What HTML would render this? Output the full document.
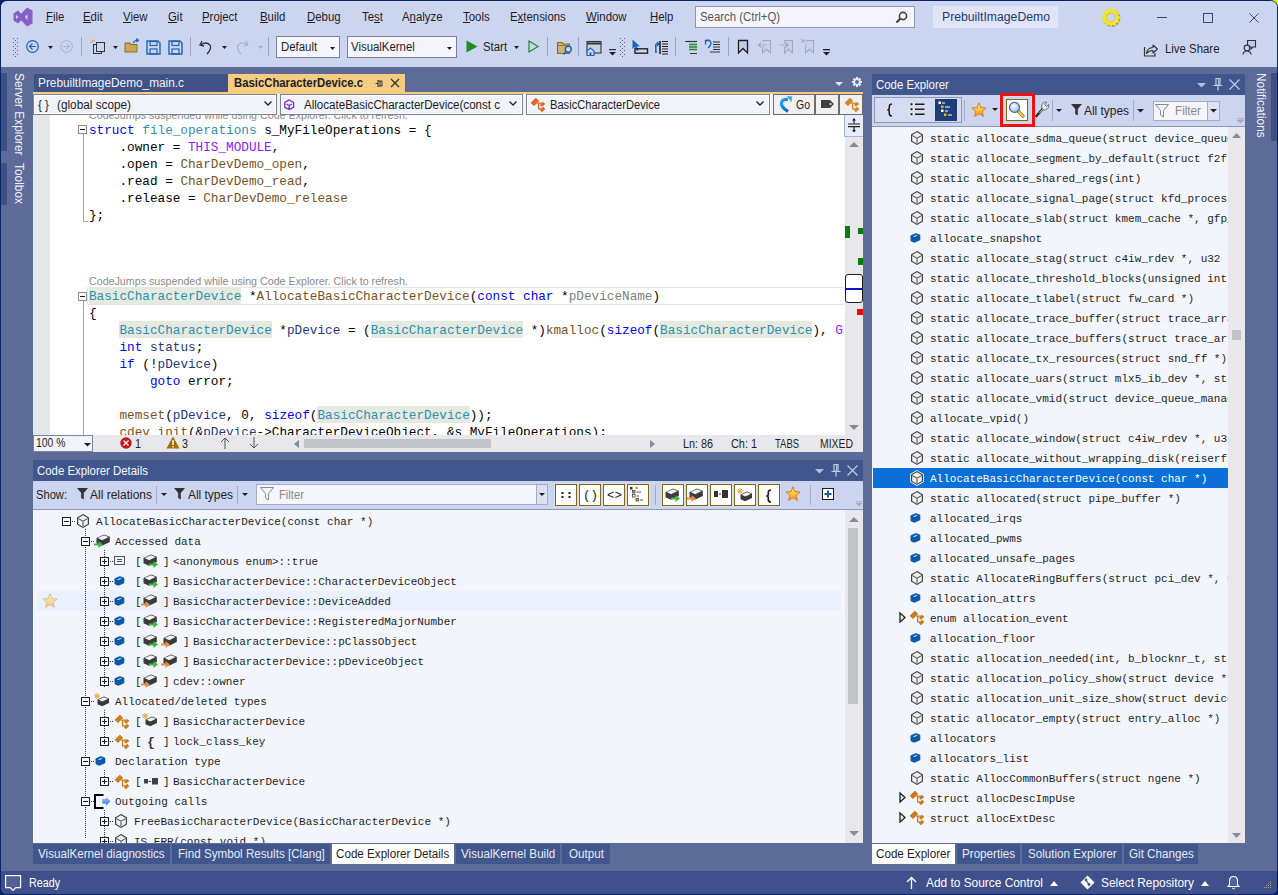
<!DOCTYPE html>
<html><head><meta charset="utf-8">
<style>
*{margin:0;padding:0;box-sizing:border-box}
html,body{width:1278px;height:895px;overflow:hidden;background:#0b2466}
body{font-family:"Liberation Sans",sans-serif;font-size:12px;color:#1e1e1e;position:relative}
.a{position:absolute}
.t{position:absolute;white-space:nowrap;line-height:1}
svg{overflow:visible}
</style></head><body>
<div class="a" style="left:1270px;top:0px;width:8px;height:8px;background:#d8f010;"></div>
<div class="a" style="left:0px;top:0px;width:1278px;height:895px;background:#0b2466;border-radius:0 8px 0 0;"></div>
<div class="a" style="left:1px;top:1px;width:1276px;height:893px;background:#5d6b99;border-radius:6px;overflow:hidden">
</div>
<div class="a" style="left:1px;top:1px;width:1276px;height:66px;background:#ccd5f0;border-radius:6px 6px 0 0;"></div>
<div class="a" style="left:1px;top:871px;width:1276px;height:23px;background:#40508d;border-radius:0 0 6px 6px;"></div>
<svg class="a" style="left:12px;top:6px;" width="22" height="22" viewBox="0 0 22 22"><path d="M6 4.5 L12.5 11 L6 17.5 L1.5 14.5 L1.5 7.5 Z M4 9 L4 13 L6.5 11 Z" fill="#865fc5" fill-rule="evenodd"/><path d="M15 1.5 L20.5 4.5 L20.5 17.5 L15 20.5 L8 13 L10.5 11 L8 9 Z M15.5 8 L12.8 11 L15.5 14 Z" fill="#865fc5" fill-rule="evenodd"/></svg>
<div class="t" style="left:46px;top:10.84px;font-size:12px;color:#1e1e1e;transform:scaleX(0.9500);transform-origin:0 0;">File</div>
<div class="a" style="left:46px;top:22px;width:7px;height:1px;background:#1e1e1e;"></div>
<div class="t" style="left:83px;top:10.84px;font-size:12px;color:#1e1e1e;transform:scaleX(0.9500);transform-origin:0 0;">Edit</div>
<div class="a" style="left:83px;top:22px;width:8px;height:1px;background:#1e1e1e;"></div>
<div class="t" style="left:123px;top:10.84px;font-size:12px;color:#1e1e1e;transform:scaleX(0.9500);transform-origin:0 0;">View</div>
<div class="a" style="left:123px;top:22px;width:8px;height:1px;background:#1e1e1e;"></div>
<div class="t" style="left:168px;top:10.84px;font-size:12px;color:#1e1e1e;transform:scaleX(0.9500);transform-origin:0 0;">Git</div>
<div class="a" style="left:168px;top:22px;width:9px;height:1px;background:#1e1e1e;"></div>
<div class="t" style="left:202px;top:10.84px;font-size:12px;color:#1e1e1e;transform:scaleX(0.9500);transform-origin:0 0;">Project</div>
<div class="a" style="left:202px;top:22px;width:8px;height:1px;background:#1e1e1e;"></div>
<div class="t" style="left:260px;top:10.84px;font-size:12px;color:#1e1e1e;transform:scaleX(0.9500);transform-origin:0 0;">Build</div>
<div class="a" style="left:260px;top:22px;width:8px;height:1px;background:#1e1e1e;"></div>
<div class="t" style="left:307px;top:10.84px;font-size:12px;color:#1e1e1e;transform:scaleX(0.9500);transform-origin:0 0;">Debug</div>
<div class="a" style="left:307px;top:22px;width:8px;height:1px;background:#1e1e1e;"></div>
<div class="t" style="left:362px;top:10.84px;font-size:12px;color:#1e1e1e;transform:scaleX(0.9500);transform-origin:0 0;">Test</div>
<div class="a" style="left:374px;top:22px;width:6px;height:1px;background:#1e1e1e;"></div>
<div class="t" style="left:402px;top:10.84px;font-size:12px;color:#1e1e1e;transform:scaleX(0.9500);transform-origin:0 0;">Analyze</div>
<div class="a" style="left:410px;top:22px;width:6px;height:1px;background:#1e1e1e;"></div>
<div class="t" style="left:463px;top:10.84px;font-size:12px;color:#1e1e1e;transform:scaleX(0.9500);transform-origin:0 0;">Tools</div>
<div class="a" style="left:463px;top:22px;width:7px;height:1px;background:#1e1e1e;"></div>
<div class="t" style="left:510px;top:10.84px;font-size:12px;color:#1e1e1e;transform:scaleX(0.9500);transform-origin:0 0;">Extensions</div>
<div class="a" style="left:518px;top:22px;width:6px;height:1px;background:#1e1e1e;"></div>
<div class="t" style="left:586px;top:10.84px;font-size:12px;color:#1e1e1e;transform:scaleX(0.9500);transform-origin:0 0;">Window</div>
<div class="a" style="left:586px;top:22px;width:11px;height:1px;background:#1e1e1e;"></div>
<div class="t" style="left:650px;top:10.84px;font-size:12px;color:#1e1e1e;transform:scaleX(0.9500);transform-origin:0 0;">Help</div>
<div class="a" style="left:650px;top:22px;width:8px;height:1px;background:#1e1e1e;"></div>
<div class="a" style="left:695px;top:6px;width:220px;height:22px;background:#f5f6fb;border:1px solid #8e95ae;"></div>
<div class="t" style="left:700px;top:10.84px;font-size:12px;color:#555;transform:scaleX(0.9500);transform-origin:0 0;">Search (Ctrl+Q)</div>
<svg class="a" style="left:895px;top:11px;" width="13" height="13" viewBox="0 0 13 13"><circle cx="8" cy="5" r="3.6" stroke="#444" stroke-width="1.6" fill="none"/><path d="M5.5 7.5 L1.5 11.5" stroke="#444" stroke-width="2.2"/></svg>
<div class="a" style="left:933px;top:6px;width:125px;height:22px;background:#dfe5f6;"></div>
<div class="t" style="left:942px;top:10.84px;font-size:12px;color:#1e3a78;transform:scaleX(1.0184);transform-origin:0 0;">PrebuiltImageDemo</div>
<svg class="a" style="left:1100px;top:8px;" width="22" height="20" viewBox="0 0 22 20"><g transform="translate(0.9,0.9)" opacity="0.45"><circle cx="10.9" cy="9.4" r="7" fill="none" stroke="#4a4a6a" stroke-width="3.2"/></g><rect x="9.7" y="0" width="2.4" height="2.6" fill="#f2e22a" transform="rotate(0 10.9 9.4)"/><rect x="9.7" y="0" width="2.4" height="2.6" fill="#f2e22a" transform="rotate(30 10.9 9.4)"/><rect x="9.7" y="0" width="2.4" height="2.6" fill="#f2e22a" transform="rotate(60 10.9 9.4)"/><rect x="9.7" y="0" width="2.4" height="2.6" fill="#f2e22a" transform="rotate(90 10.9 9.4)"/><rect x="9.7" y="0" width="2.4" height="2.6" fill="#f2e22a" transform="rotate(120 10.9 9.4)"/><rect x="9.7" y="0" width="2.4" height="2.6" fill="#f2e22a" transform="rotate(150 10.9 9.4)"/><rect x="9.7" y="0" width="2.4" height="2.6" fill="#f2e22a" transform="rotate(180 10.9 9.4)"/><rect x="9.7" y="0" width="2.4" height="2.6" fill="#f2e22a" transform="rotate(210 10.9 9.4)"/><rect x="9.7" y="0" width="2.4" height="2.6" fill="#f2e22a" transform="rotate(240 10.9 9.4)"/><rect x="9.7" y="0" width="2.4" height="2.6" fill="#f2e22a" transform="rotate(270 10.9 9.4)"/><rect x="9.7" y="0" width="2.4" height="2.6" fill="#f2e22a" transform="rotate(300 10.9 9.4)"/><rect x="9.7" y="0" width="2.4" height="2.6" fill="#f2e22a" transform="rotate(330 10.9 9.4)"/><circle cx="10.9" cy="9.4" r="6.1" fill="none" stroke="#f5e52a" stroke-width="3.6"/><circle cx="10.9" cy="9.4" r="4.4" fill="none" stroke="#b0a020" stroke-width="0.6" opacity="0.6"/></svg>
<div class="a" style="left:1157px;top:17px;width:10px;height:1px;background:#3c4670;"></div>
<div class="a" style="left:1203px;top:13px;width:10px;height:10px;border:1px solid #3c4670;"></div>
<svg class="a" style="left:1249px;top:13px;" width="10" height="10" viewBox="0 0 10 10"><path d="M0.5 0.5 L9.5 9.5 M9.5 0.5 L0.5 9.5" stroke="#3c4670" stroke-width="1"/></svg>
<svg class="a" style="left:13px;top:38px;" width="5" height="18" viewBox="0 0 5 18"><rect x="0" y="0" width="1" height="1" fill="#555d7a"/><rect x="2" y="2" width="1" height="1" fill="#555d7a"/><rect x="4" y="0" width="1" height="1" fill="#555d7a"/><rect x="0" y="4" width="1" height="1" fill="#555d7a"/><rect x="2" y="6" width="1" height="1" fill="#555d7a"/><rect x="4" y="4" width="1" height="1" fill="#555d7a"/><rect x="0" y="8" width="1" height="1" fill="#555d7a"/><rect x="2" y="10" width="1" height="1" fill="#555d7a"/><rect x="4" y="8" width="1" height="1" fill="#555d7a"/><rect x="0" y="12" width="1" height="1" fill="#555d7a"/><rect x="2" y="14" width="1" height="1" fill="#555d7a"/><rect x="4" y="12" width="1" height="1" fill="#555d7a"/><rect x="0" y="16" width="1" height="1" fill="#555d7a"/><rect x="2" y="18" width="1" height="1" fill="#555d7a"/><rect x="4" y="16" width="1" height="1" fill="#555d7a"/></svg>
<svg class="a" style="left:26px;top:40px;" width="13" height="13" viewBox="0 0 13 13"><circle cx="6.5" cy="6.5" r="5.8" stroke="#1e64b4" stroke-width="1.2" fill="#ccd5f0"/><path d="M10 6.5 H3.5 M6.5 3.5 L3.5 6.5 L6.5 9.5" stroke="#1e64b4" stroke-width="1.2" fill="none"/></svg>
<svg class="a" style="left:48px;top:46px;" width="5" height="3" viewBox="0 0 5 3"><path d="M0 0 L5 0 L2.5 3 Z" fill="#1e1e1e"/></svg>
<svg class="a" style="left:60px;top:40px;" width="13" height="13" viewBox="0 0 13 13"><circle cx="6.5" cy="6.5" r="5.8" stroke="#a8b0c8" stroke-width="1" fill="none"/><path d="M3 6.5 H9.5 M6.5 3.5 L9.5 6.5 L6.5 9.5" stroke="#a8b0c8" stroke-width="1" fill="none"/></svg>
<div class="a" style="left:81px;top:37px;width:1px;height:19px;background:#9aa3c4;"></div>
<svg class="a" style="left:90px;top:39px;" width="16" height="16" viewBox="0 0 16 16"><rect x="3.5" y="5.5" width="8" height="9" fill="none" stroke="#333"/><rect x="6.5" y="3.5" width="8" height="9" fill="#ccd5f0" stroke="#333"/><path d="M2 1 L3 3 M0 3 L2 3.5 M4.5 0.5 L4 2.5" stroke="#c8a040"/></svg>
<svg class="a" style="left:113px;top:46px;" width="5" height="3" viewBox="0 0 5 3"><path d="M0 0 L5 0 L2.5 3 Z" fill="#1e1e1e"/></svg>
<svg class="a" style="left:124px;top:38px;" width="17" height="16" viewBox="0 0 17 16"><path d="M1 5 H6 L7 6.5 H13 V14 H1 Z" fill="#c9a652" stroke="#8f6d1e"/><path d="M9 5 Q11 2 14 2 M12 0.5 L14.5 2 L12.5 4" stroke="#1e64b4" fill="none" stroke-width="1.2"/></svg>
<svg class="a" style="left:146px;top:40px;" width="15" height="15" viewBox="0 0 15 15"><path d="M1 1 H12 L14 3 V14 H1 Z" fill="none" stroke="#1e64b4" stroke-width="1.4"/><rect x="4" y="1.5" width="7" height="4" fill="none" stroke="#1e64b4" stroke-width="1.2"/><rect x="4" y="9" width="7" height="5" fill="none" stroke="#1e64b4" stroke-width="1.2"/></svg>
<svg class="a" style="left:168px;top:40px;" width="15" height="15" viewBox="0 0 15 15"><path d="M1 1 H12 L14 3 V14 H1 Z" fill="none" stroke="#1e64b4" stroke-width="1.4"/><rect x="4" y="1.5" width="7" height="4" fill="none" stroke="#1e64b4" stroke-width="1.2"/><rect x="4" y="9" width="7" height="5" fill="none" stroke="#1e64b4" stroke-width="1.2"/></svg>
<div class="a" style="left:190px;top:37px;width:1px;height:19px;background:#9aa3c4;"></div>
<svg class="a" style="left:199px;top:40px;" width="14" height="15" viewBox="0 0 14 15"><path d="M3 1 L1 5 L5 6 M1.5 5 Q7 1 11 5 Q13 9 8 14" stroke="#333" stroke-width="1.3" fill="none"/></svg>
<svg class="a" style="left:222px;top:46px;" width="5" height="3" viewBox="0 0 5 3"><path d="M0 0 L5 0 L2.5 3 Z" fill="#1e1e1e"/></svg>
<svg class="a" style="left:235px;top:40px;" width="14" height="15" viewBox="0 0 14 15"><path d="M11 1 L13 5 L9 6 M12.5 5 Q7 1 3 5 Q1 9 6 14" stroke="#a8b0c8" stroke-width="1.1" fill="none"/></svg>
<svg class="a" style="left:258px;top:46px;" width="5" height="3" viewBox="0 0 5 3"><path d="M0 0 L5 0 L2.5 3 Z" fill="#a8b0c8"/></svg>
<div class="a" style="left:268px;top:37px;width:1px;height:19px;background:#9aa3c4;"></div>
<div class="a" style="left:276px;top:36px;width:64px;height:22px;background:#f5f6fb;border:1px solid #7a8398;"></div>
<div class="t" style="left:281px;top:41.34px;font-size:12px;color:#1e1e1e;transform:scaleX(0.9500);transform-origin:0 0;">Default</div>
<svg class="a" style="left:330px;top:47px;" width="5" height="3" viewBox="0 0 5 3"><path d="M0 0 L5 0 L2.5 3 Z" fill="#1e1e1e"/></svg>
<div class="a" style="left:347px;top:36px;width:110px;height:22px;background:#f5f6fb;border:1px solid #7a8398;"></div>
<div class="t" style="left:351px;top:41.34px;font-size:12px;color:#1e1e1e;transform:scaleX(0.9500);transform-origin:0 0;">VisualKernel</div>
<svg class="a" style="left:447px;top:47px;" width="5" height="3" viewBox="0 0 5 3"><path d="M0 0 L5 0 L2.5 3 Z" fill="#1e1e1e"/></svg>
<svg class="a" style="left:466px;top:40px;" width="12" height="13" viewBox="0 0 12 13"><path d="M0.5 0.5 L11.5 6.5 L0.5 12.5 Z" fill="#1f8a2a"/></svg>
<div class="t" style="left:483px;top:41.34px;font-size:12px;color:#1e1e1e;transform:scaleX(0.9500);transform-origin:0 0;">Start</div>
<svg class="a" style="left:514px;top:46px;" width="5" height="3" viewBox="0 0 5 3"><path d="M0 0 L5 0 L2.5 3 Z" fill="#1e1e1e"/></svg>
<svg class="a" style="left:528px;top:40px;" width="11" height="13" viewBox="0 0 11 13"><path d="M1 1 L10 6.5 L1 12 Z" fill="none" stroke="#1f8a2a" stroke-width="1.2"/></svg>
<div class="a" style="left:547px;top:37px;width:1px;height:19px;background:#9aa3c4;"></div>
<svg class="a" style="left:556px;top:40px;" width="18" height="16" viewBox="0 0 18 16"><path d="M1.5 2.5 H6 L7.5 4 H13.5 V13.5 H1.5 Z" fill="#c8b27a" stroke="#8c6a1e" stroke-width="1.1"/><path d="M1.5 5.5 H13.5" stroke="#8c6a1e" stroke-width="0.8"/><circle cx="12.3" cy="9.2" r="3" fill="#ccd5f0" stroke="#1e64b4" stroke-width="1.4"/><path d="M10.2 11.5 L7.5 14.5" stroke="#1e64b4" stroke-width="1.6"/></svg>
<div class="a" style="left:578px;top:37px;width:1px;height:19px;background:#9aa3c4;"></div>
<svg class="a" style="left:586px;top:40px;" width="17" height="16" viewBox="0 0 17 16"><rect x="1" y="1.5" width="14" height="11.5" fill="#c8d0e6" stroke="#333" stroke-width="1.1"/><path d="M1 3.5 H15" stroke="#333" stroke-width="2"/><path d="M1 15.5 V11 L4.5 8 L8 11 V15.5 Z" fill="#ccd5f0" stroke="#1e64b4" stroke-width="1.2"/><rect x="3.5" y="12.5" width="2" height="3" fill="#1e64b4"/></svg>
<svg class="a" style="left:609px;top:49px;" width="7" height="7" viewBox="0 0 7 7"><rect x="0" y="0" width="7" height="1.2" fill="#333"/><path d="M0 3 L7 3 L3.5 6.5 Z" fill="#1e1e1e"/></svg>
<svg class="a" style="left:620px;top:38px;" width="5" height="18" viewBox="0 0 5 18"><rect x="0" y="0" width="1" height="1" fill="#555d7a"/><rect x="2" y="2" width="1" height="1" fill="#555d7a"/><rect x="4" y="0" width="1" height="1" fill="#555d7a"/><rect x="0" y="4" width="1" height="1" fill="#555d7a"/><rect x="2" y="6" width="1" height="1" fill="#555d7a"/><rect x="4" y="4" width="1" height="1" fill="#555d7a"/><rect x="0" y="8" width="1" height="1" fill="#555d7a"/><rect x="2" y="10" width="1" height="1" fill="#555d7a"/><rect x="4" y="8" width="1" height="1" fill="#555d7a"/><rect x="0" y="12" width="1" height="1" fill="#555d7a"/><rect x="2" y="14" width="1" height="1" fill="#555d7a"/><rect x="4" y="12" width="1" height="1" fill="#555d7a"/><rect x="0" y="16" width="1" height="1" fill="#555d7a"/><rect x="2" y="18" width="1" height="1" fill="#555d7a"/><rect x="4" y="16" width="1" height="1" fill="#555d7a"/></svg>
<svg class="a" style="left:632px;top:39px;" width="17" height="16" viewBox="0 0 17 16"><path d="M0.5 0.5 L0.5 10 L3 8 L5 12 L6.5 11.3 L4.6 7.4 L7.8 7.2 Z" fill="#1e64b4"/><rect x="3" y="9.8" width="12.5" height="4.4" fill="none" stroke="#222" stroke-width="1.4"/></svg>
<svg class="a" style="left:654px;top:40px;" width="15" height="15" viewBox="0 0 15 15"><path d="M1 12 H3 M1.8 4 V12" stroke="#1e64b4" stroke-width="1.5" fill="none"/><path d="M1.8 4 H4 M3 2 L5 4 L3 6" stroke="#1e64b4" fill="none" stroke-width="1.3"/><path d="M6 1 V14" stroke="#222" stroke-width="1.6"/><path d="M8 1.5 H14 M8 4 H14 M8 6.5 H14 M8 9 H14 M8 11.5 H14 M8 14 H14" stroke="#222" stroke-width="1.1"/></svg>
<div class="a" style="left:675px;top:37px;width:1px;height:19px;background:#9aa3c4;"></div>
<svg class="a" style="left:684px;top:40px;" width="15" height="15" viewBox="0 0 15 15"><path d="M1 1.5 H6 M6 13.5 H13" stroke="#333" stroke-width="1.2"/><path d="M5 4.5 H13 M5 7 H13 M5 9.5 H13" stroke="#1f8a2a" stroke-width="1.3"/><path d="M3 1.5 H13" stroke="#333" stroke-width="1.2"/></svg>
<svg class="a" style="left:704px;top:39px;" width="17" height="16" viewBox="0 0 17 16"><path d="M1.5 5.5 L1.5 1.5 L5.5 1.5" stroke="#1e64b4" stroke-width="1.3" fill="none"/><path d="M1.8 1.8 Q6 0 7 4 Q7 7 4 9" stroke="#1e64b4" stroke-width="1.3" fill="none"/><path d="M9 3 H16 M9 5.5 H16 M9 8 H16 M9 10.5 H16 M6 13 H16" stroke="#333" stroke-width="1.1"/></svg>
<div class="a" style="left:728px;top:37px;width:1px;height:19px;background:#9aa3c4;"></div>
<svg class="a" style="left:737px;top:39px;" width="12" height="16" viewBox="0 0 12 16"><path d="M1.5 1.5 H10.5 V14 L6 9.5 L1.5 14 Z" fill="#c3cbe6" stroke="#1e1e1e" stroke-width="1.3"/></svg>
<svg class="a" style="left:757px;top:39px;" width="15" height="16" viewBox="0 0 15 16"><path d="M6 3 V1.5 H13.5 V14 L9.5 10 L5.5 14 V8" fill="#c8d0ea" stroke="#a3a9bd" stroke-width="1.1"/><path d="M9 6 H1.5 M4 3.5 L1.5 6 L4 8.5" stroke="#a3a9bd" fill="none" stroke-width="1.1"/></svg>
<svg class="a" style="left:779px;top:39px;" width="15" height="16" viewBox="0 0 15 16"><path d="M5.5 4 V1.5 H13.5 V14 L9.5 10 L5.5 14 V8" fill="#c8d0ea" stroke="#a3a9bd" stroke-width="1.1"/><path d="M0.5 6 H9 M6.5 3.5 L9 6 L6.5 8.5" stroke="#a3a9bd" fill="none" stroke-width="1.1"/></svg>
<svg class="a" style="left:800px;top:38px;" width="15" height="17" viewBox="0 0 15 17"><path d="M5.5 2.5 H13.5 V15 L9.5 11 L5.5 15 V7" fill="#c8d0ea" stroke="#a3a9bd" stroke-width="1.1"/><path d="M1 1 L5 5 M5 1 L1 5" stroke="#a3a9bd" stroke-width="1"/></svg>
<svg class="a" style="left:823px;top:49px;" width="7" height="7" viewBox="0 0 7 7"><rect x="0" y="0" width="7" height="1.3" fill="#1e1e1e"/><path d="M0 3 L7 3 L3.5 6.5 Z" fill="#1e1e1e"/></svg>
<svg class="a" style="left:1143px;top:42px;" width="16" height="15" viewBox="0 0 16 15"><path d="M1.5 5 V14 H12 V11" stroke="#333" fill="none" stroke-width="1.2"/><path d="M3.5 11.5 Q4 6 10 5.5 V3 L14.5 7 L10 11 V8.5 Q6 8.5 3.5 11.5 Z" stroke="#333" fill="#ccd5f0" stroke-width="1.1" stroke-linejoin="round"/></svg>
<div class="t" style="left:1165px;top:42.84px;font-size:12px;color:#1e1e1e;transform:scaleX(0.9500);transform-origin:0 0;">Live Share</div>
<svg class="a" style="left:1242px;top:40px;" width="15" height="15" viewBox="0 0 15 15"><path d="M5.5 5 V0.5 H13.5 V7 H11 L9 9 V7 H8" fill="#c3cbe6" stroke="#333" stroke-width="1.1"/><circle cx="5" cy="8" r="2.8" fill="#ccd5f0" stroke="#333" stroke-width="1.2"/><path d="M0.8 14.5 Q1.5 11 5 11 Q8.5 11 9.2 14.5" stroke="#333" fill="#c3cbe6" stroke-width="1.2"/></svg>
<div class="a" style="left:1px;top:73px;width:6px;height:78px;background:#3e5083;"></div>
<div class="a" style="left:1px;top:163px;width:6px;height:42px;background:#3e5083;"></div>
<div class="t" style="left:12px;top:73px;font-size:12.5px;color:#f0f2fa;transform-origin:0 0;transform:translate(12.5px,0) rotate(90deg) scaleX(0.9500);line-height:1">Server Explorer</div>
<div class="t" style="left:12px;top:163px;font-size:12.5px;color:#f0f2fa;transform-origin:0 0;transform:translate(12.5px,0) rotate(90deg) scaleX(0.9500);line-height:1">Toolbox</div>
<div class="a" style="left:1271px;top:73px;width:6px;height:68px;background:#3e5083;"></div>
<div class="t" style="left:1254px;top:73px;font-size:12.5px;color:#f0f2fa;transform-origin:0 0;transform:translate(12.5px,0) rotate(90deg) scaleX(0.9500);line-height:1">Notifications</div>
<div class="a" style="left:34px;top:74px;width:194px;height:18px;background:#3f5186;"></div>
<div class="t" style="left:38px;top:76.84px;font-size:12px;color:#f0f2fa;transform:scaleX(0.9860);transform-origin:0 0;">PrebuiltImageDemo_main.c</div>
<div class="a" style="left:228px;top:74px;width:177px;height:18px;background:#f5cc84;"></div>
<div class="t" style="left:233.5px;top:76.84px;font-size:12px;color:#1e1e1e;font-weight:bold;transform:scaleX(0.9433);transform-origin:0 0;">BasicCharacterDevice.c</div>
<svg class="a" style="left:375px;top:79px;" width="9" height="9" viewBox="0 0 9 9"><path d="M0.5 4.5 H3 M3 1 V8 M3 2 H7 V7 H3 M5 2 V7" stroke="#333" fill="none"/></svg>
<svg class="a" style="left:390px;top:78px;" width="10" height="10" viewBox="0 0 10 10"><path d="M1 1 L9 9 M9 1 L1 9" stroke="#333" stroke-width="1.3"/></svg>
<svg class="a" style="left:835px;top:82px;" width="8" height="4" viewBox="0 0 8 4"><path d="M0 0 H8 L4 4 Z" fill="#e0e4f4"/></svg>
<svg class="a" style="left:852px;top:77px;" width="10" height="10" viewBox="0 0 10 10"><rect x="4" y="0" width="2" height="2.5" fill="#e6eaf6" transform="rotate(0 5 5)"/><rect x="4" y="0" width="2" height="2.5" fill="#e6eaf6" transform="rotate(45 5 5)"/><rect x="4" y="0" width="2" height="2.5" fill="#e6eaf6" transform="rotate(90 5 5)"/><rect x="4" y="0" width="2" height="2.5" fill="#e6eaf6" transform="rotate(135 5 5)"/><rect x="4" y="0" width="2" height="2.5" fill="#e6eaf6" transform="rotate(180 5 5)"/><rect x="4" y="0" width="2" height="2.5" fill="#e6eaf6" transform="rotate(225 5 5)"/><rect x="4" y="0" width="2" height="2.5" fill="#e6eaf6" transform="rotate(270 5 5)"/><rect x="4" y="0" width="2" height="2.5" fill="#e6eaf6" transform="rotate(315 5 5)"/><circle cx="5" cy="5" r="2.8" fill="none" stroke="#e6eaf6" stroke-width="1.8"/></svg>
<div class="a" style="left:33px;top:92px;width:830px;height:2px;background:#f5cc84;"></div>
<div class="a" style="left:33px;top:94px;width:830px;height:21px;background:#f3f3f7;"></div>
<div class="a" style="left:33px;top:94px;width:244px;height:21px;background:#f0f3fa;border:1px solid #7a8398;box-shadow:inset 0 0 0 1px #ffffff;"></div>
<div class="t" style="left:38px;top:98.84px;font-size:12px;color:#1e1e1e;transform:scaleX(0.9500);transform-origin:0 0;">{ }</div>
<div class="t" style="left:57px;top:98.84px;font-size:12px;color:#1e1e1e;transform:scaleX(0.9817);transform-origin:0 0;">(global scope)</div>
<svg class="a" style="left:264px;top:101px;" width="8" height="5" viewBox="0 0 8 5"><path d="M0.5 0.5 L4 4 L7.5 0.5" stroke="#1e1e1e" fill="none" stroke-width="1.3"/></svg>
<div class="a" style="left:280px;top:94px;width:243px;height:21px;background:#f0f3fa;border:1px solid #7a8398;box-shadow:inset 0 0 0 1px #ffffff;"></div>
<svg class="a" style="left:284px;top:99px;" width="11" height="12" viewBox="0 0 11 12"><path d="M5.2 1 L9.6 3.3 V8.3 L5.2 10.6 L0.8 8.3 V3.3 Z M2.5 5 L5.2 6.5 L7.9 5 M5.2 6.5 V10.6" stroke="#7b2fbe" fill="none" stroke-width="1.3"/></svg>
<div class="t" style="left:304px;top:98.84px;font-size:12px;color:#1e1e1e;transform:scaleX(0.9635);transform-origin:0 0;">AllocateBasicCharacterDevice(const c</div>
<svg class="a" style="left:509px;top:101px;" width="8" height="5" viewBox="0 0 8 5"><path d="M0.5 0.5 L4 4 L7.5 0.5" stroke="#1e1e1e" fill="none" stroke-width="1.3"/></svg>
<div class="a" style="left:526px;top:94px;width:244px;height:21px;background:#f0f3fa;border:1px solid #7a8398;box-shadow:inset 0 0 0 1px #ffffff;"></div>
<svg class="a" style="left:530px;top:97px;" width="16" height="16" viewBox="0 0 16 16"><g transform="scale(1.0)"><path d="M5.9 1.1 L8.8 3.9 L3.9 8.7 L1 5.8 Z M13.1 5.2 L14.9 7 L11.8 9.4 L10.3 7.7 Z M13.1 10.1 L14.9 12.1 L12 14.8 L10.2 13.2 Z" fill="#dc6a2a" stroke="#dc6a2a" stroke-width="0.7" stroke-linejoin="round"/><path d="M7 6.2 H12 M8.6 6.2 V11.8 H11.5" stroke="#dc6a2a" stroke-width="1.3" fill="none"/></g></svg>
<div class="t" style="left:550px;top:98.84px;font-size:12px;color:#1e1e1e;transform:scaleX(0.9266);transform-origin:0 0;">BasicCharacterDevice</div>
<svg class="a" style="left:756px;top:101px;" width="8" height="5" viewBox="0 0 8 5"><path d="M0.5 0.5 L4 4 L7.5 0.5" stroke="#1e1e1e" fill="none" stroke-width="1.3"/></svg>
<div class="a" style="left:773px;top:94px;width:42px;height:21px;background:#f0f0f0;border:1px solid #6d6d6d;"></div>
<div class="a" style="left:815px;top:94px;width:24px;height:21px;background:#f0f0f0;border:1px solid #6d6d6d;"></div>
<div class="a" style="left:839px;top:94px;width:24px;height:21px;background:#f0f0f0;border:1px solid #6d6d6d;"></div>
<svg class="a" style="left:779px;top:96px;" width="14" height="17" viewBox="0 0 14 17"><defs><linearGradient id="goG" x1="0" y1="0" x2="1" y2="1"><stop offset="0" stop-color="#2aa8f0"/><stop offset="1" stop-color="#0a64c0"/></linearGradient></defs><path d="M9 15.5 Q1.5 11 2.5 6.5 Q3.5 3 9 3.5" stroke="url(#goG)" stroke-width="3.2" fill="none"/><path d="M8 0 L13 0.5 L12.5 6.5 Z" fill="#2aa8f0"/></svg>
<div class="t" style="left:795.5px;top:98.84px;font-size:12px;color:#1e1e1e;transform:scaleX(0.8746);transform-origin:0 0;">Go</div>
<svg class="a" style="left:821px;top:100px;" width="13" height="8" viewBox="0 0 13 8"><path d="M0 0 H9 L13 4 L9 8 H0 Z" fill="#404040"/><circle cx="9.5" cy="4" r="1.1" fill="#f0f0f0"/></svg>
<svg class="a" style="left:844px;top:97px;" width="16" height="16" viewBox="0 0 16 16"><g transform="scale(1.0)"><path d="M5.9 1.1 L8.8 3.9 L3.9 8.7 L1 5.8 Z M13.1 5.2 L14.9 7 L11.8 9.4 L10.3 7.7 Z M13.1 10.1 L14.9 12.1 L12 14.8 L10.2 13.2 Z" fill="#d0862a" stroke="#d0862a" stroke-width="0.7" stroke-linejoin="round"/><path d="M7 6.2 H12 M8.6 6.2 V11.8 H11.5" stroke="#d0862a" stroke-width="1.3" fill="none"/></g></svg>
<div class="a" style="left:33px;top:115px;width:830px;height:320px;background:#ffffff;"></div>
<div class="a" style="left:33px;top:115px;width:17px;height:320px;background:#e6e7e8;"></div>
<div class="a" style="left:845px;top:115px;width:18px;height:320px;background:#e8e8ec;"></div>
<div class="a" style="left:844px;top:115px;width:19px;height:22px;background:#e6ecfa;border-left:1px solid #a4b4dc;border-bottom:1px solid #a4b4dc;"></div>
<svg class="a" style="left:848px;top:118px;" width="12" height="15" viewBox="0 0 12 15"><path d="M0 6 H12 M0 8.6 H12" stroke="#1e1e1e" stroke-width="1.1"/><path d="M6 2 V5.5 M6 9 V12.5" stroke="#1e1e1e" stroke-width="1.2"/><path d="M4 2.6 L6 0 L8 2.6 Z M4 11.9 L6 14.5 L8 11.9 Z" fill="#1e1e1e"/></svg>
<svg class="a" style="left:849px;top:142px;" width="10" height="5" viewBox="0 0 10 5"><path d="M0 5 L5 0 L10 5 Z" fill="#868999"/></svg>
<svg class="a" style="left:849px;top:425px;" width="10" height="5" viewBox="0 0 10 5"><path d="M0 0 L5 5 L10 0 Z" fill="#868999"/></svg>
<div class="a" style="left:845px;top:226px;width:5px;height:12px;background:#0f7a0f;"></div>
<div class="a" style="left:858px;top:228px;width:5px;height:6px;background:#0f7a0f;"></div>
<div class="a" style="left:858px;top:258px;width:5px;height:7px;background:#0f7a0f;"></div>
<div class="a" style="left:845px;top:274px;width:18px;height:29px;background:#fff;border:1px solid #1e1e1e;border-radius:3px;"></div>
<div class="a" style="left:846px;top:288px;width:16px;height:2px;background:#1010d0;"></div>
<div class="a" style="left:857px;top:309px;width:6px;height:6px;background:#ff0000;"></div>
<div class="a" style="left:50px;top:115px;width:794px;height:320px;overflow:hidden">
<div class="t" style="left:39px;top:-4.81px;font-size:11px;color:#8a8a8a;transform:scaleX(0.971);transform-origin:0 0">CodeJumps suspended while using Code Explorer. Click to refresh.</div>
<div class="t" style="left:39px;top:9.77px;font-size:12.69px;font-family:'Liberation Mono',monospace;white-space:pre"><span style="color:#0000ff">struct </span><span style="color:#2b91af">file_operations</span><span style="color:#000000"> s_MyFileOperations = {</span></div>
<div class="t" style="left:39px;top:26.77px;font-size:12.69px;font-family:'Liberation Mono',monospace;white-space:pre"><span style="color:#000000">    .owner = </span><span style="color:#8a1bff">THIS_MODULE</span><span style="color:#000000">,</span></div>
<div class="t" style="left:39px;top:43.77px;font-size:12.69px;font-family:'Liberation Mono',monospace;white-space:pre"><span style="color:#000000">    .open = </span><span style="color:#74531f">CharDevDemo_open</span><span style="color:#000000">,</span></div>
<div class="t" style="left:39px;top:60.77px;font-size:12.69px;font-family:'Liberation Mono',monospace;white-space:pre"><span style="color:#000000">    .read = </span><span style="color:#74531f">CharDevDemo_read</span><span style="color:#000000">,</span></div>
<div class="t" style="left:39px;top:77.77px;font-size:12.69px;font-family:'Liberation Mono',monospace;white-space:pre"><span style="color:#000000">    .release = </span><span style="color:#74531f">CharDevDemo_release</span></div>
<div class="t" style="left:39px;top:94.77px;font-size:12.69px;font-family:'Liberation Mono',monospace;white-space:pre"><span style="color:#000000">};</span></div>
<div class="t" style="left:39px;top:161.19px;font-size:11px;color:#8a8a8a;transform:scaleX(0.971);transform-origin:0 0">CodeJumps suspended while using Code Explorer. Click to refresh.</div>
<div class="a" style="left:37px;top:172px;width:800px;height:18px;border:1px solid #e4e4ec;border-right:none"></div>
<div class="a" style="left:39.00px;top:172px;width:152.28px;height:17px;background:#e5e9df"></div><div class="t" style="left:39px;top:175.77px;font-size:12.69px;font-family:'Liberation Mono',monospace;white-space:pre"><span style="color:#2b91af">BasicCharacterDevice</span><span style="color:#000000"> *</span><span style="color:#74531f">AllocateBasicCharacterDevice</span><span style="color:#000000">(</span><span style="color:#0000ff">const</span><span style="color:#000000"> </span><span style="color:#0000ff">char</span><span style="color:#000000"> *</span><span style="color:#808080">pDeviceName</span><span style="color:#000000">)</span></div>
<div class="t" style="left:39px;top:192.77px;font-size:12.69px;font-family:'Liberation Mono',monospace;white-space:pre"><span style="color:#000000">{</span></div>
<div class="a" style="left:69.46px;top:206px;width:152.28px;height:17px;background:#e5e9df"></div><div class="a" style="left:320.72px;top:206px;width:152.28px;height:17px;background:#e5e9df"></div><div class="a" style="left:610.05px;top:206px;width:152.28px;height:17px;background:#e5e9df"></div><div class="t" style="left:39px;top:209.77px;font-size:12.69px;font-family:'Liberation Mono',monospace;white-space:pre"><span style="color:#000000">    </span><span style="color:#2b91af">BasicCharacterDevice</span><span style="color:#000000"> *</span><span style="color:#1f377f">pDevice</span><span style="color:#000000"> = (</span><span style="color:#2b91af">BasicCharacterDevice</span><span style="color:#000000"> *)</span><span style="color:#74531f">kmalloc</span><span style="color:#000000">(</span><span style="color:#0000ff">sizeof</span><span style="color:#000000">(</span><span style="color:#2b91af">BasicCharacterDevice</span><span style="color:#000000">), </span><span style="color:#8a1bff">GFP_KERNEL);</span></div>
<div class="t" style="left:39px;top:226.77px;font-size:12.69px;font-family:'Liberation Mono',monospace;white-space:pre"><span style="color:#000000">    </span><span style="color:#0000ff">int</span><span style="color:#000000"> </span><span style="color:#1f377f">status</span><span style="color:#000000">;</span></div>
<div class="t" style="left:39px;top:243.77px;font-size:12.69px;font-family:'Liberation Mono',monospace;white-space:pre"><span style="color:#000000">    </span><span style="color:#0000ff">if</span><span style="color:#000000"> (!</span><span style="color:#1f377f">pDevice</span><span style="color:#000000">)</span></div>
<div class="t" style="left:39px;top:260.77px;font-size:12.69px;font-family:'Liberation Mono',monospace;white-space:pre"><span style="color:#000000">        </span><span style="color:#0000ff">goto</span><span style="color:#000000"> error;</span></div>
<div class="a" style="left:267.42px;top:291px;width:152.28px;height:17px;background:#e5e9df"></div><div class="t" style="left:39px;top:294.77px;font-size:12.69px;font-family:'Liberation Mono',monospace;white-space:pre"><span style="color:#000000">    </span><span style="color:#74531f">memset</span><span style="color:#000000">(</span><span style="color:#1f377f">pDevice</span><span style="color:#000000">, 0, </span><span style="color:#0000ff">sizeof</span><span style="color:#000000">(</span><span style="color:#2b91af">BasicCharacterDevice</span><span style="color:#000000">));</span></div>
<div class="t" style="left:39px;top:311.77px;font-size:12.69px;font-family:'Liberation Mono',monospace;white-space:pre"><span style="color:#000000">    </span><span style="color:#74531f">cdev_init</span><span style="color:#000000">(&amp;</span><span style="color:#1f377f">pDevice</span><span style="color:#000000">-&gt;</span><span style="color:#000000">CharacterDeviceObject</span><span style="color:#000000">, &amp;</span><span style="color:#000000">s_MyFileOperations</span><span style="color:#000000">);</span></div>
</div>
<div class="a" style="left:78px;top:125px;width:9px;height:9px;background:#fff;border:1px solid #8c8c8c;"></div>
<div class="a" style="left:80px;top:129px;width:5px;height:1px;background:#1e1e1e;"></div>
<div class="a" style="left:83px;top:134px;width:1px;height:88px;background:#a5a5a5;"></div>
<div class="a" style="left:83px;top:221px;width:5px;height:1px;background:#a5a5a5;"></div>
<div class="a" style="left:78px;top:292px;width:9px;height:9px;background:#fff;border:1px solid #8c8c8c;"></div>
<div class="a" style="left:80px;top:296px;width:5px;height:1px;background:#1e1e1e;"></div>
<div class="a" style="left:83px;top:301px;width:1px;height:134px;background:#a5a5a5;"></div>
<div class="a" style="left:33px;top:435px;width:830px;height:17px;background:#e8e8ec;"></div>
<div class="a" style="left:33px;top:435px;width:60px;height:17px;background:#f0f3fa;border:1px solid #7a8398;"></div>
<div class="t" style="left:35.5px;top:437.34px;font-size:12px;color:#1e1e1e;transform:scaleX(0.8670);transform-origin:0 0;">100 %</div>
<svg class="a" style="left:84px;top:443px;" width="7" height="4" viewBox="0 0 7 4"><path d="M0 0 H7 L3.5 3.5 Z" fill="#1e1e1e"/></svg>
<svg class="a" style="left:120px;top:437px;" width="12" height="12" viewBox="0 0 12 12"><circle cx="6" cy="6" r="5.7" fill="#c5161d"/><path d="M3.5 3.5 L8.5 8.5 M8.5 3.5 L3.5 8.5" stroke="#fff" stroke-width="1.3"/></svg>
<div class="t" style="left:135px;top:437.84px;font-size:12px;color:#1e1e1e;transform:scaleX(0.8990);transform-origin:0 0;">1</div>
<svg class="a" style="left:166px;top:436px;" width="14" height="13" viewBox="0 0 14 13"><path d="M7 0.5 L13.5 12.5 H0.5 Z" fill="#9c7000"/><rect x="6.3" y="4" width="1.4" height="5" fill="#fff"/><rect x="6.3" y="10" width="1.4" height="1.4" fill="#fff"/></svg>
<div class="t" style="left:182px;top:437.84px;font-size:12px;color:#1e1e1e;transform:scaleX(0.8990);transform-origin:0 0;">3</div>
<svg class="a" style="left:220px;top:437px;" width="10" height="12" viewBox="0 0 10 12"><path d="M5 12 V1 M1 5 L5 1 L9 5" stroke="#555" fill="none" stroke-width="1"/></svg>
<svg class="a" style="left:249px;top:437px;" width="10" height="12" viewBox="0 0 10 12"><path d="M5 0 V11 M1 7 L5 11 L9 7" stroke="#555" fill="none" stroke-width="1"/></svg>
<svg class="a" style="left:294px;top:440px;" width="5" height="8" viewBox="0 0 5 8"><path d="M5 0 V8 L0 4 Z" fill="#868999"/></svg>
<div class="a" style="left:304px;top:439px;width:187px;height:9px;background:#c2c3c9;"></div>
<svg class="a" style="left:650px;top:440px;" width="5" height="8" viewBox="0 0 5 8"><path d="M0 0 V8 L5 4 Z" fill="#868999"/></svg>
<div class="t" style="left:683px;top:437.84px;font-size:12px;color:#1e1e1e;transform:scaleX(0.8992);transform-origin:0 0;">Ln: 86</div>
<div class="t" style="left:731px;top:437.84px;font-size:12px;color:#1e1e1e;transform:scaleX(0.9065);transform-origin:0 0;">Ch: 1</div>
<div class="t" style="left:775px;top:437.84px;font-size:12px;color:#1e1e1e;transform:scaleX(0.7881);transform-origin:0 0;">TABS</div>
<div class="t" style="left:820px;top:437.84px;font-size:12px;color:#1e1e1e;transform:scaleX(0.8683);transform-origin:0 0;">MIXED</div>
<div class="a" style="left:33px;top:460px;width:830px;height:21px;background:#40568d;"></div>
<div class="t" style="left:37px;top:464.84px;font-size:12px;color:#f5f6fb;transform:scaleX(0.9500);transform-origin:0 0;">Code Explorer Details</div>
<svg class="a" style="left:815px;top:469px;" width="9" height="5" viewBox="0 0 9 5"><path d="M0 0 H9 L4.5 4.5 Z" fill="#b4bedd"/></svg>
<svg class="a" style="left:831px;top:464px;" width="10" height="13" viewBox="0 0 10 13"><path d="M3 0.5 H7 V7 H3 Z M0.5 7.5 H9.5 M5 7.5 V12.5" stroke="#c4cce6" fill="none" stroke-width="1.2"/><path d="M5.6 1 V6.5" stroke="#c4cce6" stroke-width="1"/></svg>
<svg class="a" style="left:847px;top:465px;" width="11" height="11" viewBox="0 0 11 11"><path d="M0.5 0.5 L10.5 10.5 M10.5 0.5 L0.5 10.5" stroke="#c4cce6" stroke-width="1.2"/></svg>
<div class="a" style="left:33px;top:481px;width:830px;height:29px;background:#ccd5f0;"></div>
<div class="a" style="left:33px;top:509px;width:830px;height:1px;background:#8e97b2;"></div>
<div class="t" style="left:36px;top:488.84px;font-size:12px;color:#1e1e1e;transform:scaleX(0.9295);transform-origin:0 0;">Show:</div>
<svg class="a" style="left:77px;top:488px;" width="11" height="12" viewBox="0 0 11 12"><path d="M0 0 H11 L6.8 5 V11.5 L4.2 10 V5 Z" fill="#333"/></svg>
<div class="t" style="left:90px;top:488.84px;font-size:12px;color:#1e1e1e;">All relations</div>
<div class="a" style="left:156px;top:486px;width:1px;height:18px;background:#a4abc3;"></div>
<svg class="a" style="left:161px;top:493px;" width="6" height="3" viewBox="0 0 6 3"><path d="M0 0 H6 L3 3 Z" fill="#1e1e1e"/></svg>
<svg class="a" style="left:174px;top:488px;" width="11" height="12" viewBox="0 0 11 12"><path d="M0 0 H11 L6.8 5 V11.5 L4.2 10 V5 Z" fill="#333"/></svg>
<div class="t" style="left:188px;top:488.84px;font-size:12px;color:#1e1e1e;transform:scaleX(0.9922);transform-origin:0 0;">All types</div>
<div class="a" style="left:237px;top:486px;width:1px;height:18px;background:#a4abc3;"></div>
<svg class="a" style="left:242px;top:493px;" width="6" height="3" viewBox="0 0 6 3"><path d="M0 0 H6 L3 3 Z" fill="#1e1e1e"/></svg>
<div class="a" style="left:256px;top:484px;width:292px;height:21px;background:#f5f6fb;border:1px solid #a4abc3;"></div>
<div class="a" style="left:536px;top:485px;width:11px;height:19px;background:#dde2f2;border-left:1px solid #a4abc3;"></div>
<svg class="a" style="left:539px;top:493px;" width="6" height="3" viewBox="0 0 6 3"><path d="M0 0 H6 L3 3 Z" fill="#1e1e1e"/></svg>
<svg class="a" style="left:260px;top:487px;" width="14" height="14" viewBox="0 0 14 14"><path d="M0.5 0.5 H13.5 L8.5 6.5 V13 L5.5 11 V6.5 Z" fill="none" stroke="#8a8a8a"/></svg>
<div class="t" style="left:279px;top:488.84px;font-size:12px;color:#8a8a8a;transform:scaleX(0.9375);transform-origin:0 0;">Filter</div>
<div class="a" style="left:555px;top:484px;width:22px;height:22px;background:#ffffff;border:1px solid #8b6508;box-shadow:0 0 0 1px #d6def6;"></div>
<div class="a" style="left:579px;top:484px;width:22px;height:22px;background:#ffffff;border:1px solid #8b6508;box-shadow:0 0 0 1px #d6def6;"></div>
<div class="a" style="left:603px;top:484px;width:22px;height:22px;background:#ffffff;border:1px solid #8b6508;box-shadow:0 0 0 1px #d6def6;"></div>
<div class="a" style="left:627px;top:484px;width:22px;height:22px;background:#ffffff;border:1px solid #8b6508;box-shadow:0 0 0 1px #d6def6;"></div>
<div class="a" style="left:662px;top:484px;width:22px;height:22px;background:#ffffff;border:1px solid #8b6508;box-shadow:0 0 0 1px #d6def6;"></div>
<div class="a" style="left:686px;top:484px;width:22px;height:22px;background:#ffffff;border:1px solid #8b6508;box-shadow:0 0 0 1px #d6def6;"></div>
<div class="a" style="left:710px;top:484px;width:22px;height:22px;background:#ffffff;border:1px solid #8b6508;box-shadow:0 0 0 1px #d6def6;"></div>
<div class="a" style="left:734px;top:484px;width:22px;height:22px;background:#ffffff;border:1px solid #8b6508;box-shadow:0 0 0 1px #d6def6;"></div>
<div class="a" style="left:758px;top:484px;width:22px;height:22px;background:#ffffff;border:1px solid #8b6508;box-shadow:0 0 0 1px #d6def6;"></div>
<div class="a" style="left:655px;top:485px;width:1px;height:20px;background:#a4abc3;"></div>
<div class="a" style="left:810px;top:485px;width:1px;height:20px;background:#a4abc3;"></div>
<svg class="a" style="left:561px;top:491px;" width="9" height="8" viewBox="0 0 9 8"><rect x="0.5" y="1" width="2" height="2" fill="#1e1e1e"/><rect x="0.5" y="5" width="2" height="2" fill="#1e1e1e"/><rect x="7.5" y="1" width="2" height="2" fill="#1e1e1e"/><rect x="7.5" y="5" width="2" height="2" fill="#1e1e1e"/></svg>
<div class="t" style="left:583px;top:490.42px;font-size:12.5px;color:#1e1e1e;font-family:'Liberation Mono',monospace;">()</div>
<div class="t" style="left:607px;top:490.42px;font-size:12.5px;color:#1e1e1e;font-family:'Liberation Mono',monospace;">&lt;&gt;</div>
<svg class="a" style="left:630px;top:487px;" width="16" height="16" viewBox="0 0 16 16"><rect x="0" y="0" width="2.5" height="2.5" fill="#333"/><path d="M5 1 H8" stroke="#555"/><rect x="2.5" y="3.5" width="2.5" height="2.5" fill="#e0b000" stroke="#333" stroke-width="0.7"/><path d="M6.5 5 H11" stroke="#555"/><rect x="2.5" y="7.5" width="2.5" height="2.5" fill="#fff" stroke="#333" stroke-width="0.7"/><path d="M6.5 9 H9" stroke="#555"/><rect x="6" y="11.5" width="2.5" height="2.5" fill="#e0b000" stroke="#333" stroke-width="0.7"/><path d="M10 13 H13" stroke="#555"/></svg>
<svg class="a" style="left:663px;top:487px;" width="18" height="16" viewBox="0 0 18 16"><g transform="translate(2,1)"><path d="M0.5 4 L8 0.5 L13.8 2.8 V8 L6 11.8 L0.5 9.3 Z" fill="#3a3a3a"/><path d="M1.6 4.1 L8 1.3 L12.6 3.1 L6.2 6.2 Z" fill="#f2f2f2"/></g><path d="M8 10.5 H12.5 V8 L17 11.5 L12.5 15 V12.5 H8 Z" fill="#3cb83c"/></svg>
<svg class="a" style="left:687px;top:487px;" width="18" height="16" viewBox="0 0 18 16"><g transform="translate(2,1)"><path d="M0.5 4 L8 0.5 L13.8 2.8 V8 L6 11.8 L0.5 9.3 Z" fill="#3a3a3a"/><path d="M1.6 4.1 L8 1.3 L12.6 3.1 L6.2 6.2 Z" fill="#f2f2f2"/></g><path d="M0 10.5 H4.5 V8 L9 11.5 L4.5 15 V12.5 H0 Z" fill="#f0883a"/></svg>
<svg class="a" style="left:714px;top:490px;" width="14" height="8" viewBox="0 0 14 8"><rect x="0" y="1" width="4" height="6" fill="#333"/><path d="M5 4 H7" stroke="#333"/><rect x="8" y="0" width="6" height="8" fill="#333"/></svg>
<svg class="a" style="left:737px;top:488px;" width="16" height="14" viewBox="0 0 16 14"><g transform="translate(3,3)"><path d="M0.5 3.6 L7 0.5 L12 2.5 V7 L5.2 10.3 L0.5 8.2 Z" fill="#3a3a3a"/><path d="M1.5 3.7 L7 1.2 L11 2.8 L5.4 5.5 Z" fill="#f2f2f2"/></g><g stroke="#e89a20" stroke-width="0.9"><path d="M3 0 V6 M0 3 H6 M0.9 0.9 L5.1 5.1 M5.1 0.9 L0.9 5.1"/></g><circle cx="3" cy="3" r="1.3" fill="#f5b030"/></svg>
<svg class="a" style="left:765px;top:489px;" width="8" height="14" viewBox="0 0 8 14"><path d="M6 1 Q3.3 1 3.3 3.5 V5.3 Q3.3 7 1.3 7 Q3.3 7 3.3 8.7 V10.5 Q3.3 13 6 13" stroke="#1e1e1e" stroke-width="1.7" fill="none"/></svg>
<svg class="a" style="left:785px;top:486px;" width="16" height="16" viewBox="0 0 16 16"><defs><linearGradient id="sg785486" x1="0" y1="0" x2="0" y2="1"><stop offset="0" stop-color="#fff3a0"/><stop offset="0.5" stop-color="#ffc83d"/><stop offset="1" stop-color="#f09020"/></linearGradient></defs><polygon points="8.00,0.80 9.94,5.63 15.13,5.98 11.14,9.32 12.41,14.37 8.00,11.60 3.59,14.37 4.86,9.32 0.87,5.98 6.06,5.63" fill="url(#sg785486)" stroke="#e07a1f" stroke-width="1" stroke-linejoin="round"/></svg>
<svg class="a" style="left:822px;top:488px;" width="12" height="12" viewBox="0 0 12 12"><rect x="0.5" y="0.5" width="11" height="11" fill="#fff" stroke="#1e1e1e"/><path d="M6 2.5 V9.5 M2.5 6 H9.5" stroke="#1e5aa8" stroke-width="2"/></svg>
<svg class="a" style="left:856px;top:501px;" width="6" height="5" viewBox="0 0 6 5"><path d="M0 0.5 H6 M0 2 H6 L3 5 Z" stroke="#aab" fill="#aab" stroke-width="0.8"/></svg>
<div class="a" style="left:33px;top:510px;width:812px;height:333px;background:#f2f5fc;"></div>
<div class="a" style="left:845px;top:510px;width:18px;height:333px;background:#e8e8ec;"></div>
<svg class="a" style="left:849px;top:517px;" width="10" height="5" viewBox="0 0 10 5"><path d="M0 5 L5 0 L10 5 Z" fill="#868999"/></svg>
<div class="a" style="left:848px;top:528px;width:10px;height:176px;background:#c2c3c9;"></div>
<svg class="a" style="left:849px;top:831px;" width="10" height="5" viewBox="0 0 10 5"><path d="M0 0 L5 5 L10 0 Z" fill="#868999"/></svg>
<div class="a" style="left:37px;top:591px;width:804px;height:20px;background:#eaf1fc;"></div>
<div class="a" style="left:0;top:0;opacity:0.45"><svg class="a" style="left:42px;top:593px;" width="16" height="16" viewBox="0 0 16 16"><defs><linearGradient id="sg42593" x1="0" y1="0" x2="0" y2="1"><stop offset="0" stop-color="#fff3a0"/><stop offset="0.5" stop-color="#ffc83d"/><stop offset="1" stop-color="#f09020"/></linearGradient></defs><polygon points="8.00,0.80 9.94,5.63 15.13,5.98 11.14,9.32 12.41,14.37 8.00,11.60 3.59,14.37 4.86,9.32 0.87,5.98 6.06,5.63" fill="url(#sg42593)" stroke="#e07a1f" stroke-width="1" stroke-linejoin="round"/></svg></div>
<div class="a" style="left:33px;top:510px;width:811px;height:333px;overflow:hidden">
<svg class="a" style="left:52px;top:19px;" width="1" height="310" viewBox="0 0 1 310"><rect x="0" y="0" width="1" height="1" fill="#333"/><rect x="0" y="2" width="1" height="1" fill="#333"/><rect x="0" y="4" width="1" height="1" fill="#333"/><rect x="0" y="6" width="1" height="1" fill="#333"/><rect x="0" y="8" width="1" height="1" fill="#333"/><rect x="0" y="10" width="1" height="1" fill="#333"/><rect x="0" y="12" width="1" height="1" fill="#333"/><rect x="0" y="14" width="1" height="1" fill="#333"/><rect x="0" y="16" width="1" height="1" fill="#333"/><rect x="0" y="18" width="1" height="1" fill="#333"/><rect x="0" y="20" width="1" height="1" fill="#333"/><rect x="0" y="22" width="1" height="1" fill="#333"/><rect x="0" y="24" width="1" height="1" fill="#333"/><rect x="0" y="26" width="1" height="1" fill="#333"/><rect x="0" y="28" width="1" height="1" fill="#333"/><rect x="0" y="30" width="1" height="1" fill="#333"/><rect x="0" y="32" width="1" height="1" fill="#333"/><rect x="0" y="34" width="1" height="1" fill="#333"/><rect x="0" y="36" width="1" height="1" fill="#333"/><rect x="0" y="38" width="1" height="1" fill="#333"/><rect x="0" y="40" width="1" height="1" fill="#333"/><rect x="0" y="42" width="1" height="1" fill="#333"/><rect x="0" y="44" width="1" height="1" fill="#333"/><rect x="0" y="46" width="1" height="1" fill="#333"/><rect x="0" y="48" width="1" height="1" fill="#333"/><rect x="0" y="50" width="1" height="1" fill="#333"/><rect x="0" y="52" width="1" height="1" fill="#333"/><rect x="0" y="54" width="1" height="1" fill="#333"/><rect x="0" y="56" width="1" height="1" fill="#333"/><rect x="0" y="58" width="1" height="1" fill="#333"/><rect x="0" y="60" width="1" height="1" fill="#333"/><rect x="0" y="62" width="1" height="1" fill="#333"/><rect x="0" y="64" width="1" height="1" fill="#333"/><rect x="0" y="66" width="1" height="1" fill="#333"/><rect x="0" y="68" width="1" height="1" fill="#333"/><rect x="0" y="70" width="1" height="1" fill="#333"/><rect x="0" y="72" width="1" height="1" fill="#333"/><rect x="0" y="74" width="1" height="1" fill="#333"/><rect x="0" y="76" width="1" height="1" fill="#333"/><rect x="0" y="78" width="1" height="1" fill="#333"/><rect x="0" y="80" width="1" height="1" fill="#333"/><rect x="0" y="82" width="1" height="1" fill="#333"/><rect x="0" y="84" width="1" height="1" fill="#333"/><rect x="0" y="86" width="1" height="1" fill="#333"/><rect x="0" y="88" width="1" height="1" fill="#333"/><rect x="0" y="90" width="1" height="1" fill="#333"/><rect x="0" y="92" width="1" height="1" fill="#333"/><rect x="0" y="94" width="1" height="1" fill="#333"/><rect x="0" y="96" width="1" height="1" fill="#333"/><rect x="0" y="98" width="1" height="1" fill="#333"/><rect x="0" y="100" width="1" height="1" fill="#333"/><rect x="0" y="102" width="1" height="1" fill="#333"/><rect x="0" y="104" width="1" height="1" fill="#333"/><rect x="0" y="106" width="1" height="1" fill="#333"/><rect x="0" y="108" width="1" height="1" fill="#333"/><rect x="0" y="110" width="1" height="1" fill="#333"/><rect x="0" y="112" width="1" height="1" fill="#333"/><rect x="0" y="114" width="1" height="1" fill="#333"/><rect x="0" y="116" width="1" height="1" fill="#333"/><rect x="0" y="118" width="1" height="1" fill="#333"/><rect x="0" y="120" width="1" height="1" fill="#333"/><rect x="0" y="122" width="1" height="1" fill="#333"/><rect x="0" y="124" width="1" height="1" fill="#333"/><rect x="0" y="126" width="1" height="1" fill="#333"/><rect x="0" y="128" width="1" height="1" fill="#333"/><rect x="0" y="130" width="1" height="1" fill="#333"/><rect x="0" y="132" width="1" height="1" fill="#333"/><rect x="0" y="134" width="1" height="1" fill="#333"/><rect x="0" y="136" width="1" height="1" fill="#333"/><rect x="0" y="138" width="1" height="1" fill="#333"/><rect x="0" y="140" width="1" height="1" fill="#333"/><rect x="0" y="142" width="1" height="1" fill="#333"/><rect x="0" y="144" width="1" height="1" fill="#333"/><rect x="0" y="146" width="1" height="1" fill="#333"/><rect x="0" y="148" width="1" height="1" fill="#333"/><rect x="0" y="150" width="1" height="1" fill="#333"/><rect x="0" y="152" width="1" height="1" fill="#333"/><rect x="0" y="154" width="1" height="1" fill="#333"/><rect x="0" y="156" width="1" height="1" fill="#333"/><rect x="0" y="158" width="1" height="1" fill="#333"/><rect x="0" y="160" width="1" height="1" fill="#333"/><rect x="0" y="162" width="1" height="1" fill="#333"/><rect x="0" y="164" width="1" height="1" fill="#333"/><rect x="0" y="166" width="1" height="1" fill="#333"/><rect x="0" y="168" width="1" height="1" fill="#333"/><rect x="0" y="170" width="1" height="1" fill="#333"/><rect x="0" y="172" width="1" height="1" fill="#333"/><rect x="0" y="174" width="1" height="1" fill="#333"/><rect x="0" y="176" width="1" height="1" fill="#333"/><rect x="0" y="178" width="1" height="1" fill="#333"/><rect x="0" y="180" width="1" height="1" fill="#333"/><rect x="0" y="182" width="1" height="1" fill="#333"/><rect x="0" y="184" width="1" height="1" fill="#333"/><rect x="0" y="186" width="1" height="1" fill="#333"/><rect x="0" y="188" width="1" height="1" fill="#333"/><rect x="0" y="190" width="1" height="1" fill="#333"/><rect x="0" y="192" width="1" height="1" fill="#333"/><rect x="0" y="194" width="1" height="1" fill="#333"/><rect x="0" y="196" width="1" height="1" fill="#333"/><rect x="0" y="198" width="1" height="1" fill="#333"/><rect x="0" y="200" width="1" height="1" fill="#333"/><rect x="0" y="202" width="1" height="1" fill="#333"/><rect x="0" y="204" width="1" height="1" fill="#333"/><rect x="0" y="206" width="1" height="1" fill="#333"/><rect x="0" y="208" width="1" height="1" fill="#333"/><rect x="0" y="210" width="1" height="1" fill="#333"/><rect x="0" y="212" width="1" height="1" fill="#333"/><rect x="0" y="214" width="1" height="1" fill="#333"/><rect x="0" y="216" width="1" height="1" fill="#333"/><rect x="0" y="218" width="1" height="1" fill="#333"/><rect x="0" y="220" width="1" height="1" fill="#333"/><rect x="0" y="222" width="1" height="1" fill="#333"/><rect x="0" y="224" width="1" height="1" fill="#333"/><rect x="0" y="226" width="1" height="1" fill="#333"/><rect x="0" y="228" width="1" height="1" fill="#333"/><rect x="0" y="230" width="1" height="1" fill="#333"/><rect x="0" y="232" width="1" height="1" fill="#333"/><rect x="0" y="234" width="1" height="1" fill="#333"/><rect x="0" y="236" width="1" height="1" fill="#333"/><rect x="0" y="238" width="1" height="1" fill="#333"/><rect x="0" y="240" width="1" height="1" fill="#333"/><rect x="0" y="242" width="1" height="1" fill="#333"/><rect x="0" y="244" width="1" height="1" fill="#333"/><rect x="0" y="246" width="1" height="1" fill="#333"/><rect x="0" y="248" width="1" height="1" fill="#333"/><rect x="0" y="250" width="1" height="1" fill="#333"/><rect x="0" y="252" width="1" height="1" fill="#333"/><rect x="0" y="254" width="1" height="1" fill="#333"/><rect x="0" y="256" width="1" height="1" fill="#333"/><rect x="0" y="258" width="1" height="1" fill="#333"/><rect x="0" y="260" width="1" height="1" fill="#333"/><rect x="0" y="262" width="1" height="1" fill="#333"/><rect x="0" y="264" width="1" height="1" fill="#333"/><rect x="0" y="266" width="1" height="1" fill="#333"/><rect x="0" y="268" width="1" height="1" fill="#333"/><rect x="0" y="270" width="1" height="1" fill="#333"/><rect x="0" y="272" width="1" height="1" fill="#333"/><rect x="0" y="274" width="1" height="1" fill="#333"/><rect x="0" y="276" width="1" height="1" fill="#333"/><rect x="0" y="278" width="1" height="1" fill="#333"/><rect x="0" y="280" width="1" height="1" fill="#333"/><rect x="0" y="282" width="1" height="1" fill="#333"/><rect x="0" y="284" width="1" height="1" fill="#333"/><rect x="0" y="286" width="1" height="1" fill="#333"/><rect x="0" y="288" width="1" height="1" fill="#333"/><rect x="0" y="290" width="1" height="1" fill="#333"/><rect x="0" y="292" width="1" height="1" fill="#333"/><rect x="0" y="294" width="1" height="1" fill="#333"/><rect x="0" y="296" width="1" height="1" fill="#333"/><rect x="0" y="298" width="1" height="1" fill="#333"/><rect x="0" y="300" width="1" height="1" fill="#333"/><rect x="0" y="302" width="1" height="1" fill="#333"/><rect x="0" y="304" width="1" height="1" fill="#333"/><rect x="0" y="306" width="1" height="1" fill="#333"/><rect x="0" y="308" width="1" height="1" fill="#333"/></svg>
<svg class="a" style="left:71px;top:40px;" width="1" height="137" viewBox="0 0 1 137"><rect x="0" y="0" width="1" height="1" fill="#333"/><rect x="0" y="2" width="1" height="1" fill="#333"/><rect x="0" y="4" width="1" height="1" fill="#333"/><rect x="0" y="6" width="1" height="1" fill="#333"/><rect x="0" y="8" width="1" height="1" fill="#333"/><rect x="0" y="10" width="1" height="1" fill="#333"/><rect x="0" y="12" width="1" height="1" fill="#333"/><rect x="0" y="14" width="1" height="1" fill="#333"/><rect x="0" y="16" width="1" height="1" fill="#333"/><rect x="0" y="18" width="1" height="1" fill="#333"/><rect x="0" y="20" width="1" height="1" fill="#333"/><rect x="0" y="22" width="1" height="1" fill="#333"/><rect x="0" y="24" width="1" height="1" fill="#333"/><rect x="0" y="26" width="1" height="1" fill="#333"/><rect x="0" y="28" width="1" height="1" fill="#333"/><rect x="0" y="30" width="1" height="1" fill="#333"/><rect x="0" y="32" width="1" height="1" fill="#333"/><rect x="0" y="34" width="1" height="1" fill="#333"/><rect x="0" y="36" width="1" height="1" fill="#333"/><rect x="0" y="38" width="1" height="1" fill="#333"/><rect x="0" y="40" width="1" height="1" fill="#333"/><rect x="0" y="42" width="1" height="1" fill="#333"/><rect x="0" y="44" width="1" height="1" fill="#333"/><rect x="0" y="46" width="1" height="1" fill="#333"/><rect x="0" y="48" width="1" height="1" fill="#333"/><rect x="0" y="50" width="1" height="1" fill="#333"/><rect x="0" y="52" width="1" height="1" fill="#333"/><rect x="0" y="54" width="1" height="1" fill="#333"/><rect x="0" y="56" width="1" height="1" fill="#333"/><rect x="0" y="58" width="1" height="1" fill="#333"/><rect x="0" y="60" width="1" height="1" fill="#333"/><rect x="0" y="62" width="1" height="1" fill="#333"/><rect x="0" y="64" width="1" height="1" fill="#333"/><rect x="0" y="66" width="1" height="1" fill="#333"/><rect x="0" y="68" width="1" height="1" fill="#333"/><rect x="0" y="70" width="1" height="1" fill="#333"/><rect x="0" y="72" width="1" height="1" fill="#333"/><rect x="0" y="74" width="1" height="1" fill="#333"/><rect x="0" y="76" width="1" height="1" fill="#333"/><rect x="0" y="78" width="1" height="1" fill="#333"/><rect x="0" y="80" width="1" height="1" fill="#333"/><rect x="0" y="82" width="1" height="1" fill="#333"/><rect x="0" y="84" width="1" height="1" fill="#333"/><rect x="0" y="86" width="1" height="1" fill="#333"/><rect x="0" y="88" width="1" height="1" fill="#333"/><rect x="0" y="90" width="1" height="1" fill="#333"/><rect x="0" y="92" width="1" height="1" fill="#333"/><rect x="0" y="94" width="1" height="1" fill="#333"/><rect x="0" y="96" width="1" height="1" fill="#333"/><rect x="0" y="98" width="1" height="1" fill="#333"/><rect x="0" y="100" width="1" height="1" fill="#333"/><rect x="0" y="102" width="1" height="1" fill="#333"/><rect x="0" y="104" width="1" height="1" fill="#333"/><rect x="0" y="106" width="1" height="1" fill="#333"/><rect x="0" y="108" width="1" height="1" fill="#333"/><rect x="0" y="110" width="1" height="1" fill="#333"/><rect x="0" y="112" width="1" height="1" fill="#333"/><rect x="0" y="114" width="1" height="1" fill="#333"/><rect x="0" y="116" width="1" height="1" fill="#333"/><rect x="0" y="118" width="1" height="1" fill="#333"/><rect x="0" y="120" width="1" height="1" fill="#333"/><rect x="0" y="122" width="1" height="1" fill="#333"/><rect x="0" y="124" width="1" height="1" fill="#333"/><rect x="0" y="126" width="1" height="1" fill="#333"/><rect x="0" y="128" width="1" height="1" fill="#333"/><rect x="0" y="130" width="1" height="1" fill="#333"/><rect x="0" y="132" width="1" height="1" fill="#333"/><rect x="0" y="134" width="1" height="1" fill="#333"/><rect x="0" y="136" width="1" height="1" fill="#333"/></svg>
<svg class="a" style="left:71px;top:200px;" width="1" height="30" viewBox="0 0 1 30"><rect x="0" y="0" width="1" height="1" fill="#333"/><rect x="0" y="2" width="1" height="1" fill="#333"/><rect x="0" y="4" width="1" height="1" fill="#333"/><rect x="0" y="6" width="1" height="1" fill="#333"/><rect x="0" y="8" width="1" height="1" fill="#333"/><rect x="0" y="10" width="1" height="1" fill="#333"/><rect x="0" y="12" width="1" height="1" fill="#333"/><rect x="0" y="14" width="1" height="1" fill="#333"/><rect x="0" y="16" width="1" height="1" fill="#333"/><rect x="0" y="18" width="1" height="1" fill="#333"/><rect x="0" y="20" width="1" height="1" fill="#333"/><rect x="0" y="22" width="1" height="1" fill="#333"/><rect x="0" y="24" width="1" height="1" fill="#333"/><rect x="0" y="26" width="1" height="1" fill="#333"/><rect x="0" y="28" width="1" height="1" fill="#333"/></svg>
<svg class="a" style="left:71px;top:260px;" width="1" height="10" viewBox="0 0 1 10"><rect x="0" y="0" width="1" height="1" fill="#333"/><rect x="0" y="2" width="1" height="1" fill="#333"/><rect x="0" y="4" width="1" height="1" fill="#333"/><rect x="0" y="6" width="1" height="1" fill="#333"/><rect x="0" y="8" width="1" height="1" fill="#333"/></svg>
<svg class="a" style="left:71px;top:300px;" width="1" height="33" viewBox="0 0 1 33"><rect x="0" y="0" width="1" height="1" fill="#333"/><rect x="0" y="2" width="1" height="1" fill="#333"/><rect x="0" y="4" width="1" height="1" fill="#333"/><rect x="0" y="6" width="1" height="1" fill="#333"/><rect x="0" y="8" width="1" height="1" fill="#333"/><rect x="0" y="10" width="1" height="1" fill="#333"/><rect x="0" y="12" width="1" height="1" fill="#333"/><rect x="0" y="14" width="1" height="1" fill="#333"/><rect x="0" y="16" width="1" height="1" fill="#333"/><rect x="0" y="18" width="1" height="1" fill="#333"/><rect x="0" y="20" width="1" height="1" fill="#333"/><rect x="0" y="22" width="1" height="1" fill="#333"/><rect x="0" y="24" width="1" height="1" fill="#333"/><rect x="0" y="26" width="1" height="1" fill="#333"/><rect x="0" y="28" width="1" height="1" fill="#333"/><rect x="0" y="30" width="1" height="1" fill="#333"/><rect x="0" y="32" width="1" height="1" fill="#333"/></svg>
<svg class="a" style="left:29px;top:7px;" width="9" height="9" viewBox="0 0 9 9"><rect x="0.5" y="0.5" width="8" height="8" fill="#f5f7fd" stroke="#1e1e1e"/><path d="M2 4.5 H7" stroke="#1e1e1e"/></svg><svg class="a" style="left:39px;top:11px;" width="4" height="1" viewBox="0 0 4 1"><rect x="0" y="0" width="1" height="1" fill="#333"/><rect x="2" y="0" width="1" height="1" fill="#333"/></svg><svg class="a" style="left:44px;top:4px;" width="12" height="14" viewBox="0 0 12 14"><path d="M6 0.6 L11.4 3.8 V10.2 L6 13.4 L0.6 10.2 V3.8 Z" fill="#f0f0f0" stroke="#404040" stroke-width="1.2"/><path d="M1.4 4.6 L6 7.2 L10.6 4.6" stroke="#404040" stroke-width="1" fill="none"/><path d="M6 7.2 V13" stroke="#888" stroke-width="1.6"/></svg><div class="t" style="left:63px;top:7.068499999999972px;font-size:11px;color:#1e1e1e;font-family:'Liberation Mono',monospace;white-space:pre;">AllocateBasicCharacterDevice(const char *)</div>
<svg class="a" style="left:48px;top:27px;" width="9" height="9" viewBox="0 0 9 9"><rect x="0.5" y="0.5" width="8" height="8" fill="#f5f7fd" stroke="#1e1e1e"/><path d="M2 4.5 H7" stroke="#1e1e1e"/></svg><svg class="a" style="left:58px;top:31px;" width="4" height="1" viewBox="0 0 4 1"><rect x="0" y="0" width="1" height="1" fill="#333"/><rect x="2" y="0" width="1" height="1" fill="#333"/></svg><svg class="a" style="left:61px;top:23px;" width="18" height="16" viewBox="0 0 18 16"><g transform="translate(2,1)"><path d="M0.5 4 L8 0.5 L13.8 2.8 V8 L6 11.8 L0.5 9.3 Z" fill="#3a3a3a"/><path d="M1.6 4.1 L8 1.3 L12.6 3.1 L6.2 6.2 Z" fill="#f2f2f2"/></g><path d="M0 10.5 H4.5 V8 L9 11.5 L4.5 15 V12.5 H0 Z" fill="#3cb83c"/></svg><div class="t" style="left:82px;top:27.068499999999972px;font-size:11px;color:#1e1e1e;font-family:'Liberation Mono',monospace;white-space:pre;">Accessed data</div>
<svg class="a" style="left:67px;top:47px;" width="9" height="9" viewBox="0 0 9 9"><rect x="0.5" y="0.5" width="8" height="8" fill="#f5f7fd" stroke="#1e1e1e"/><path d="M2 4.5 H7" stroke="#1e1e1e"/><path d="M4.5 2 V7" stroke="#1e1e1e"/></svg><svg class="a" style="left:77px;top:51px;" width="4" height="1" viewBox="0 0 4 1"><rect x="0" y="0" width="1" height="1" fill="#333"/><rect x="2" y="0" width="1" height="1" fill="#333"/></svg><svg class="a" style="left:81px;top:46px;" width="11" height="9" viewBox="0 0 11 9"><rect x="0.5" y="0.5" width="10" height="8" fill="#f5f5f5" stroke="#555"/><path d="M3 3.5 H8 M3 5.5 H8" stroke="#1b5fb0" stroke-width="1"/></svg><div class="t" style="left:102px;top:47.06849999999997px;font-size:11px;color:#1e1e1e;font-family:'Liberation Mono',monospace;">[</div><svg class="a" style="left:108px;top:43px;" width="18" height="16" viewBox="0 0 18 16"><g transform="translate(2,1)"><path d="M0.5 4 L8 0.5 L13.8 2.8 V8 L6 11.8 L0.5 9.3 Z" fill="#3a3a3a"/><path d="M1.6 4.1 L8 1.3 L12.6 3.1 L6.2 6.2 Z" fill="#f2f2f2"/></g><path d="M8 10.5 H12.5 V8 L17 11.5 L12.5 15 V12.5 H8 Z" fill="#3cb83c"/></svg><div class="t" style="left:130px;top:47.06849999999997px;font-size:11px;color:#1e1e1e;font-family:'Liberation Mono',monospace;">]</div><div class="t" style="left:140px;top:47.06849999999997px;font-size:11px;color:#1e1e1e;font-family:'Liberation Mono',monospace;white-space:pre;">&lt;anonymous enum&gt;::true</div>
<svg class="a" style="left:67px;top:67px;" width="9" height="9" viewBox="0 0 9 9"><rect x="0.5" y="0.5" width="8" height="8" fill="#f5f7fd" stroke="#1e1e1e"/><path d="M2 4.5 H7" stroke="#1e1e1e"/><path d="M4.5 2 V7" stroke="#1e1e1e"/></svg><svg class="a" style="left:77px;top:71px;" width="4" height="1" viewBox="0 0 4 1"><rect x="0" y="0" width="1" height="1" fill="#333"/><rect x="2" y="0" width="1" height="1" fill="#333"/></svg><svg class="a" style="left:81px;top:66px;" width="11" height="10" viewBox="0 0 11 10"><path d="M0.5 3.2 Q0.5 2.5 1.5 2 L5.5 0.3 Q6 0.1 6.8 0.4 L9.6 1.6 Q10.3 2 10.3 2.8 V6.4 Q10.3 7 9.5 7.4 L5 9.4 Q4.3 9.7 3.6 9.4 L1.2 8.2 Q0.5 7.8 0.5 7 Z" fill="#0b5aaa"/><path d="M3 3.6 L6.4 2.1 L7.6 2.6 L4.2 4.1 Z" fill="#ffffff" opacity="0.9"/></svg><div class="t" style="left:102px;top:67.06849999999997px;font-size:11px;color:#1e1e1e;font-family:'Liberation Mono',monospace;">[</div><svg class="a" style="left:108px;top:63px;" width="18" height="16" viewBox="0 0 18 16"><g transform="translate(2,1)"><path d="M0.5 4 L8 0.5 L13.8 2.8 V8 L6 11.8 L0.5 9.3 Z" fill="#3a3a3a"/><path d="M1.6 4.1 L8 1.3 L12.6 3.1 L6.2 6.2 Z" fill="#f2f2f2"/></g><path d="M8 10.5 H12.5 V8 L17 11.5 L12.5 15 V12.5 H8 Z" fill="#3cb83c"/></svg><div class="t" style="left:130px;top:67.06849999999997px;font-size:11px;color:#1e1e1e;font-family:'Liberation Mono',monospace;">]</div><div class="t" style="left:140px;top:67.06849999999997px;font-size:11px;color:#1e1e1e;font-family:'Liberation Mono',monospace;white-space:pre;">BasicCharacterDevice::CharacterDeviceObject</div>
<svg class="a" style="left:67px;top:87px;" width="9" height="9" viewBox="0 0 9 9"><rect x="0.5" y="0.5" width="8" height="8" fill="#f5f7fd" stroke="#1e1e1e"/><path d="M2 4.5 H7" stroke="#1e1e1e"/><path d="M4.5 2 V7" stroke="#1e1e1e"/></svg><svg class="a" style="left:77px;top:91px;" width="4" height="1" viewBox="0 0 4 1"><rect x="0" y="0" width="1" height="1" fill="#333"/><rect x="2" y="0" width="1" height="1" fill="#333"/></svg><svg class="a" style="left:81px;top:86px;" width="11" height="10" viewBox="0 0 11 10"><path d="M0.5 3.2 Q0.5 2.5 1.5 2 L5.5 0.3 Q6 0.1 6.8 0.4 L9.6 1.6 Q10.3 2 10.3 2.8 V6.4 Q10.3 7 9.5 7.4 L5 9.4 Q4.3 9.7 3.6 9.4 L1.2 8.2 Q0.5 7.8 0.5 7 Z" fill="#0b5aaa"/><path d="M3 3.6 L6.4 2.1 L7.6 2.6 L4.2 4.1 Z" fill="#ffffff" opacity="0.9"/></svg><div class="t" style="left:102px;top:87.06849999999997px;font-size:11px;color:#1e1e1e;font-family:'Liberation Mono',monospace;">[</div><svg class="a" style="left:108px;top:83px;" width="18" height="16" viewBox="0 0 18 16"><g transform="translate(2,1)"><path d="M0.5 4 L8 0.5 L13.8 2.8 V8 L6 11.8 L0.5 9.3 Z" fill="#3a3a3a"/><path d="M1.6 4.1 L8 1.3 L12.6 3.1 L6.2 6.2 Z" fill="#f2f2f2"/></g><path d="M0 10.5 H4.5 V8 L9 11.5 L4.5 15 V12.5 H0 Z" fill="#f0883a"/></svg><div class="t" style="left:130px;top:87.06849999999997px;font-size:11px;color:#1e1e1e;font-family:'Liberation Mono',monospace;">]</div><div class="t" style="left:140px;top:87.06849999999997px;font-size:11px;color:#1e1e1e;font-family:'Liberation Mono',monospace;white-space:pre;">BasicCharacterDevice::DeviceAdded</div>
<svg class="a" style="left:67px;top:107px;" width="9" height="9" viewBox="0 0 9 9"><rect x="0.5" y="0.5" width="8" height="8" fill="#f5f7fd" stroke="#1e1e1e"/><path d="M2 4.5 H7" stroke="#1e1e1e"/><path d="M4.5 2 V7" stroke="#1e1e1e"/></svg><svg class="a" style="left:77px;top:111px;" width="4" height="1" viewBox="0 0 4 1"><rect x="0" y="0" width="1" height="1" fill="#333"/><rect x="2" y="0" width="1" height="1" fill="#333"/></svg><svg class="a" style="left:81px;top:106px;" width="11" height="10" viewBox="0 0 11 10"><path d="M0.5 3.2 Q0.5 2.5 1.5 2 L5.5 0.3 Q6 0.1 6.8 0.4 L9.6 1.6 Q10.3 2 10.3 2.8 V6.4 Q10.3 7 9.5 7.4 L5 9.4 Q4.3 9.7 3.6 9.4 L1.2 8.2 Q0.5 7.8 0.5 7 Z" fill="#0b5aaa"/><path d="M3 3.6 L6.4 2.1 L7.6 2.6 L4.2 4.1 Z" fill="#ffffff" opacity="0.9"/></svg><div class="t" style="left:102px;top:107.06849999999997px;font-size:11px;color:#1e1e1e;font-family:'Liberation Mono',monospace;">[</div><svg class="a" style="left:108px;top:103px;" width="18" height="16" viewBox="0 0 18 16"><g transform="translate(2,1)"><path d="M0.5 4 L8 0.5 L13.8 2.8 V8 L6 11.8 L0.5 9.3 Z" fill="#3a3a3a"/><path d="M1.6 4.1 L8 1.3 L12.6 3.1 L6.2 6.2 Z" fill="#f2f2f2"/></g><path d="M8 10.5 H12.5 V8 L17 11.5 L12.5 15 V12.5 H8 Z" fill="#3cb83c"/></svg><div class="t" style="left:130px;top:107.06849999999997px;font-size:11px;color:#1e1e1e;font-family:'Liberation Mono',monospace;">]</div><div class="t" style="left:140px;top:107.06849999999997px;font-size:11px;color:#1e1e1e;font-family:'Liberation Mono',monospace;white-space:pre;">BasicCharacterDevice::RegisteredMajorNumber</div>
<svg class="a" style="left:67px;top:127px;" width="9" height="9" viewBox="0 0 9 9"><rect x="0.5" y="0.5" width="8" height="8" fill="#f5f7fd" stroke="#1e1e1e"/><path d="M2 4.5 H7" stroke="#1e1e1e"/><path d="M4.5 2 V7" stroke="#1e1e1e"/></svg><svg class="a" style="left:77px;top:131px;" width="4" height="1" viewBox="0 0 4 1"><rect x="0" y="0" width="1" height="1" fill="#333"/><rect x="2" y="0" width="1" height="1" fill="#333"/></svg><svg class="a" style="left:81px;top:126px;" width="11" height="10" viewBox="0 0 11 10"><path d="M0.5 3.2 Q0.5 2.5 1.5 2 L5.5 0.3 Q6 0.1 6.8 0.4 L9.6 1.6 Q10.3 2 10.3 2.8 V6.4 Q10.3 7 9.5 7.4 L5 9.4 Q4.3 9.7 3.6 9.4 L1.2 8.2 Q0.5 7.8 0.5 7 Z" fill="#0b5aaa"/><path d="M3 3.6 L6.4 2.1 L7.6 2.6 L4.2 4.1 Z" fill="#ffffff" opacity="0.9"/></svg><div class="t" style="left:102px;top:127.06849999999997px;font-size:11px;color:#1e1e1e;font-family:'Liberation Mono',monospace;">[</div><svg class="a" style="left:108px;top:123px;" width="18" height="16" viewBox="0 0 18 16"><g transform="translate(2,1)"><path d="M0.5 4 L8 0.5 L13.8 2.8 V8 L6 11.8 L0.5 9.3 Z" fill="#3a3a3a"/><path d="M1.6 4.1 L8 1.3 L12.6 3.1 L6.2 6.2 Z" fill="#f2f2f2"/></g><path d="M8 10.5 H12.5 V8 L17 11.5 L12.5 15 V12.5 H8 Z" fill="#3cb83c"/></svg><svg class="a" style="left:128px;top:123px;" width="18" height="16" viewBox="0 0 18 16"><g transform="translate(2,1)"><path d="M0.5 4 L8 0.5 L13.8 2.8 V8 L6 11.8 L0.5 9.3 Z" fill="#3a3a3a"/><path d="M1.6 4.1 L8 1.3 L12.6 3.1 L6.2 6.2 Z" fill="#f2f2f2"/></g><path d="M0 10.5 H4.5 V8 L9 11.5 L4.5 15 V12.5 H0 Z" fill="#f0883a"/></svg><div class="t" style="left:150px;top:127.06849999999997px;font-size:11px;color:#1e1e1e;font-family:'Liberation Mono',monospace;">]</div><div class="t" style="left:160px;top:127.06849999999997px;font-size:11px;color:#1e1e1e;font-family:'Liberation Mono',monospace;white-space:pre;">BasicCharacterDevice::pClassObject</div>
<svg class="a" style="left:67px;top:147px;" width="9" height="9" viewBox="0 0 9 9"><rect x="0.5" y="0.5" width="8" height="8" fill="#f5f7fd" stroke="#1e1e1e"/><path d="M2 4.5 H7" stroke="#1e1e1e"/><path d="M4.5 2 V7" stroke="#1e1e1e"/></svg><svg class="a" style="left:77px;top:151px;" width="4" height="1" viewBox="0 0 4 1"><rect x="0" y="0" width="1" height="1" fill="#333"/><rect x="2" y="0" width="1" height="1" fill="#333"/></svg><svg class="a" style="left:81px;top:146px;" width="11" height="10" viewBox="0 0 11 10"><path d="M0.5 3.2 Q0.5 2.5 1.5 2 L5.5 0.3 Q6 0.1 6.8 0.4 L9.6 1.6 Q10.3 2 10.3 2.8 V6.4 Q10.3 7 9.5 7.4 L5 9.4 Q4.3 9.7 3.6 9.4 L1.2 8.2 Q0.5 7.8 0.5 7 Z" fill="#0b5aaa"/><path d="M3 3.6 L6.4 2.1 L7.6 2.6 L4.2 4.1 Z" fill="#ffffff" opacity="0.9"/></svg><div class="t" style="left:102px;top:147.06849999999997px;font-size:11px;color:#1e1e1e;font-family:'Liberation Mono',monospace;">[</div><svg class="a" style="left:108px;top:143px;" width="18" height="16" viewBox="0 0 18 16"><g transform="translate(2,1)"><path d="M0.5 4 L8 0.5 L13.8 2.8 V8 L6 11.8 L0.5 9.3 Z" fill="#3a3a3a"/><path d="M1.6 4.1 L8 1.3 L12.6 3.1 L6.2 6.2 Z" fill="#f2f2f2"/></g><path d="M8 10.5 H12.5 V8 L17 11.5 L12.5 15 V12.5 H8 Z" fill="#3cb83c"/></svg><svg class="a" style="left:128px;top:143px;" width="18" height="16" viewBox="0 0 18 16"><g transform="translate(2,1)"><path d="M0.5 4 L8 0.5 L13.8 2.8 V8 L6 11.8 L0.5 9.3 Z" fill="#3a3a3a"/><path d="M1.6 4.1 L8 1.3 L12.6 3.1 L6.2 6.2 Z" fill="#f2f2f2"/></g><path d="M0 10.5 H4.5 V8 L9 11.5 L4.5 15 V12.5 H0 Z" fill="#f0883a"/></svg><div class="t" style="left:150px;top:147.06849999999997px;font-size:11px;color:#1e1e1e;font-family:'Liberation Mono',monospace;">]</div><div class="t" style="left:160px;top:147.06849999999997px;font-size:11px;color:#1e1e1e;font-family:'Liberation Mono',monospace;white-space:pre;">BasicCharacterDevice::pDeviceObject</div>
<svg class="a" style="left:67px;top:167px;" width="9" height="9" viewBox="0 0 9 9"><rect x="0.5" y="0.5" width="8" height="8" fill="#f5f7fd" stroke="#1e1e1e"/><path d="M2 4.5 H7" stroke="#1e1e1e"/><path d="M4.5 2 V7" stroke="#1e1e1e"/></svg><svg class="a" style="left:77px;top:171px;" width="4" height="1" viewBox="0 0 4 1"><rect x="0" y="0" width="1" height="1" fill="#333"/><rect x="2" y="0" width="1" height="1" fill="#333"/></svg><svg class="a" style="left:81px;top:166px;" width="11" height="10" viewBox="0 0 11 10"><path d="M0.5 3.2 Q0.5 2.5 1.5 2 L5.5 0.3 Q6 0.1 6.8 0.4 L9.6 1.6 Q10.3 2 10.3 2.8 V6.4 Q10.3 7 9.5 7.4 L5 9.4 Q4.3 9.7 3.6 9.4 L1.2 8.2 Q0.5 7.8 0.5 7 Z" fill="#0b5aaa"/><path d="M3 3.6 L6.4 2.1 L7.6 2.6 L4.2 4.1 Z" fill="#ffffff" opacity="0.9"/></svg><div class="t" style="left:102px;top:167.06849999999997px;font-size:11px;color:#1e1e1e;font-family:'Liberation Mono',monospace;">[</div><svg class="a" style="left:108px;top:163px;" width="18" height="16" viewBox="0 0 18 16"><g transform="translate(2,1)"><path d="M0.5 4 L8 0.5 L13.8 2.8 V8 L6 11.8 L0.5 9.3 Z" fill="#3a3a3a"/><path d="M1.6 4.1 L8 1.3 L12.6 3.1 L6.2 6.2 Z" fill="#f2f2f2"/></g><path d="M0 10.5 H4.5 V8 L9 11.5 L4.5 15 V12.5 H0 Z" fill="#f0883a"/></svg><div class="t" style="left:130px;top:167.06849999999997px;font-size:11px;color:#1e1e1e;font-family:'Liberation Mono',monospace;">]</div><div class="t" style="left:140px;top:167.06849999999997px;font-size:11px;color:#1e1e1e;font-family:'Liberation Mono',monospace;white-space:pre;">cdev::owner</div>
<svg class="a" style="left:48px;top:187px;" width="9" height="9" viewBox="0 0 9 9"><rect x="0.5" y="0.5" width="8" height="8" fill="#f5f7fd" stroke="#1e1e1e"/><path d="M2 4.5 H7" stroke="#1e1e1e"/></svg><svg class="a" style="left:58px;top:191px;" width="4" height="1" viewBox="0 0 4 1"><rect x="0" y="0" width="1" height="1" fill="#333"/><rect x="2" y="0" width="1" height="1" fill="#333"/></svg><svg class="a" style="left:61px;top:183px;" width="16" height="14" viewBox="0 0 16 14"><g transform="translate(3,3)"><path d="M0.5 3.6 L7 0.5 L12 2.5 V7 L5.2 10.3 L0.5 8.2 Z" fill="#3a3a3a"/><path d="M1.5 3.7 L7 1.2 L11 2.8 L5.4 5.5 Z" fill="#f2f2f2"/></g><g stroke="#e89a20" stroke-width="0.9"><path d="M3 0 V6 M0 3 H6 M0.9 0.9 L5.1 5.1 M5.1 0.9 L0.9 5.1"/></g><circle cx="3" cy="3" r="1.3" fill="#f5b030"/></svg><div class="t" style="left:82px;top:187.06849999999997px;font-size:11px;color:#1e1e1e;font-family:'Liberation Mono',monospace;white-space:pre;">Allocated/deleted types</div>
<svg class="a" style="left:67px;top:207px;" width="9" height="9" viewBox="0 0 9 9"><rect x="0.5" y="0.5" width="8" height="8" fill="#f5f7fd" stroke="#1e1e1e"/><path d="M2 4.5 H7" stroke="#1e1e1e"/><path d="M4.5 2 V7" stroke="#1e1e1e"/></svg><svg class="a" style="left:77px;top:211px;" width="4" height="1" viewBox="0 0 4 1"><rect x="0" y="0" width="1" height="1" fill="#333"/><rect x="2" y="0" width="1" height="1" fill="#333"/></svg><svg class="a" style="left:81px;top:204px;" width="16" height="16" viewBox="0 0 16 16"><g transform="scale(1.0)"><path d="M5.9 1.1 L8.8 3.9 L3.9 8.7 L1 5.8 Z M13.1 5.2 L14.9 7 L11.8 9.4 L10.3 7.7 Z M13.1 10.1 L14.9 12.1 L12 14.8 L10.2 13.2 Z" fill="#c9801c" stroke="#c9801c" stroke-width="0.7" stroke-linejoin="round"/><path d="M7 6.2 H12 M8.6 6.2 V11.8 H11.5" stroke="#c9801c" stroke-width="1.3" fill="none"/></g></svg><div class="t" style="left:102px;top:207.06849999999997px;font-size:11px;color:#1e1e1e;font-family:'Liberation Mono',monospace;">[</div><svg class="a" style="left:109px;top:203px;" width="16" height="14" viewBox="0 0 16 14"><g transform="translate(3,3)"><path d="M0.5 3.6 L7 0.5 L12 2.5 V7 L5.2 10.3 L0.5 8.2 Z" fill="#3a3a3a"/><path d="M1.5 3.7 L7 1.2 L11 2.8 L5.4 5.5 Z" fill="#f2f2f2"/></g><g stroke="#e89a20" stroke-width="0.9"><path d="M3 0 V6 M0 3 H6 M0.9 0.9 L5.1 5.1 M5.1 0.9 L0.9 5.1"/></g><circle cx="3" cy="3" r="1.3" fill="#f5b030"/></svg><div class="t" style="left:130px;top:207.06849999999997px;font-size:11px;color:#1e1e1e;font-family:'Liberation Mono',monospace;">]</div><div class="t" style="left:140px;top:207.06849999999997px;font-size:11px;color:#1e1e1e;font-family:'Liberation Mono',monospace;white-space:pre;">BasicCharacterDevice</div>
<svg class="a" style="left:67px;top:227px;" width="9" height="9" viewBox="0 0 9 9"><rect x="0.5" y="0.5" width="8" height="8" fill="#f5f7fd" stroke="#1e1e1e"/><path d="M2 4.5 H7" stroke="#1e1e1e"/><path d="M4.5 2 V7" stroke="#1e1e1e"/></svg><svg class="a" style="left:77px;top:231px;" width="4" height="1" viewBox="0 0 4 1"><rect x="0" y="0" width="1" height="1" fill="#333"/><rect x="2" y="0" width="1" height="1" fill="#333"/></svg><svg class="a" style="left:81px;top:224px;" width="16" height="16" viewBox="0 0 16 16"><g transform="scale(1.0)"><path d="M5.9 1.1 L8.8 3.9 L3.9 8.7 L1 5.8 Z M13.1 5.2 L14.9 7 L11.8 9.4 L10.3 7.7 Z M13.1 10.1 L14.9 12.1 L12 14.8 L10.2 13.2 Z" fill="#c9801c" stroke="#c9801c" stroke-width="0.7" stroke-linejoin="round"/><path d="M7 6.2 H12 M8.6 6.2 V11.8 H11.5" stroke="#c9801c" stroke-width="1.3" fill="none"/></g></svg><div class="t" style="left:102px;top:227.06849999999997px;font-size:11px;color:#1e1e1e;font-family:'Liberation Mono',monospace;">[</div><div class="t" style="left:114px;top:226.0355px;font-size:13px;color:#333;font-family:'Liberation Mono',monospace;font-weight:bold;">{</div><div class="t" style="left:130px;top:227.06849999999997px;font-size:11px;color:#1e1e1e;font-family:'Liberation Mono',monospace;">]</div><div class="t" style="left:140px;top:227.06849999999997px;font-size:11px;color:#1e1e1e;font-family:'Liberation Mono',monospace;white-space:pre;">lock_class_key</div>
<svg class="a" style="left:48px;top:247px;" width="9" height="9" viewBox="0 0 9 9"><rect x="0.5" y="0.5" width="8" height="8" fill="#f5f7fd" stroke="#1e1e1e"/><path d="M2 4.5 H7" stroke="#1e1e1e"/></svg><svg class="a" style="left:58px;top:251px;" width="4" height="1" viewBox="0 0 4 1"><rect x="0" y="0" width="1" height="1" fill="#333"/><rect x="2" y="0" width="1" height="1" fill="#333"/></svg><svg class="a" style="left:62px;top:246px;" width="11" height="10" viewBox="0 0 11 10"><path d="M0.5 3.2 Q0.5 2.5 1.5 2 L5.5 0.3 Q6 0.1 6.8 0.4 L9.6 1.6 Q10.3 2 10.3 2.8 V6.4 Q10.3 7 9.5 7.4 L5 9.4 Q4.3 9.7 3.6 9.4 L1.2 8.2 Q0.5 7.8 0.5 7 Z" fill="#0b5aaa"/><path d="M3 3.6 L6.4 2.1 L7.6 2.6 L4.2 4.1 Z" fill="#ffffff" opacity="0.9"/></svg><div class="t" style="left:82px;top:247.06849999999997px;font-size:11px;color:#1e1e1e;font-family:'Liberation Mono',monospace;white-space:pre;">Declaration type</div>
<svg class="a" style="left:67px;top:267px;" width="9" height="9" viewBox="0 0 9 9"><rect x="0.5" y="0.5" width="8" height="8" fill="#f5f7fd" stroke="#1e1e1e"/><path d="M2 4.5 H7" stroke="#1e1e1e"/><path d="M4.5 2 V7" stroke="#1e1e1e"/></svg><svg class="a" style="left:77px;top:271px;" width="4" height="1" viewBox="0 0 4 1"><rect x="0" y="0" width="1" height="1" fill="#333"/><rect x="2" y="0" width="1" height="1" fill="#333"/></svg><svg class="a" style="left:81px;top:264px;" width="16" height="16" viewBox="0 0 16 16"><g transform="scale(1.0)"><path d="M5.9 1.1 L8.8 3.9 L3.9 8.7 L1 5.8 Z M13.1 5.2 L14.9 7 L11.8 9.4 L10.3 7.7 Z M13.1 10.1 L14.9 12.1 L12 14.8 L10.2 13.2 Z" fill="#c9801c" stroke="#c9801c" stroke-width="0.7" stroke-linejoin="round"/><path d="M7 6.2 H12 M8.6 6.2 V11.8 H11.5" stroke="#c9801c" stroke-width="1.3" fill="none"/></g></svg><div class="t" style="left:102px;top:267.0685px;font-size:11px;color:#1e1e1e;font-family:'Liberation Mono',monospace;">[</div><svg class="a" style="left:111px;top:267.5px;" width="14" height="7" viewBox="0 0 14 7"><rect x="0" y="1" width="4" height="4.5" fill="#404040"/><path d="M4.5 3.5 H7" stroke="#404040"/><rect x="8" y="0" width="6" height="6.5" fill="#404040"/></svg><div class="t" style="left:130px;top:267.0685px;font-size:11px;color:#1e1e1e;font-family:'Liberation Mono',monospace;">]</div><div class="t" style="left:140px;top:267.0685px;font-size:11px;color:#1e1e1e;font-family:'Liberation Mono',monospace;white-space:pre;">BasicCharacterDevice</div>
<svg class="a" style="left:48px;top:287px;" width="9" height="9" viewBox="0 0 9 9"><rect x="0.5" y="0.5" width="8" height="8" fill="#f5f7fd" stroke="#1e1e1e"/><path d="M2 4.5 H7" stroke="#1e1e1e"/></svg><svg class="a" style="left:58px;top:291px;" width="4" height="1" viewBox="0 0 4 1"><rect x="0" y="0" width="1" height="1" fill="#333"/><rect x="2" y="0" width="1" height="1" fill="#333"/></svg><svg class="a" style="left:61px;top:284px;" width="18" height="15" viewBox="0 0 18 15"><path d="M9.5 1 H1 V14 H9.5" stroke="#000" stroke-width="2" fill="none"/><path d="M8 6.5 V13" stroke="#000" stroke-width="0" /><defs><linearGradient id="og" x1="0" y1="0" x2="0" y2="1"><stop offset="0" stop-color="#a8ccff"/><stop offset="1" stop-color="#2f6fd8"/></linearGradient></defs><path d="M8 4.5 H12 V2 L16.8 7.3 L12 12.5 V10 H8 Z" fill="url(#og)" stroke="#fff" stroke-width="0.6"/></svg><div class="t" style="left:82px;top:287.0685px;font-size:11px;color:#1e1e1e;font-family:'Liberation Mono',monospace;white-space:pre;">Outgoing calls</div>
<svg class="a" style="left:67px;top:307px;" width="9" height="9" viewBox="0 0 9 9"><rect x="0.5" y="0.5" width="8" height="8" fill="#f5f7fd" stroke="#1e1e1e"/><path d="M2 4.5 H7" stroke="#1e1e1e"/><path d="M4.5 2 V7" stroke="#1e1e1e"/></svg><svg class="a" style="left:77px;top:311px;" width="4" height="1" viewBox="0 0 4 1"><rect x="0" y="0" width="1" height="1" fill="#333"/><rect x="2" y="0" width="1" height="1" fill="#333"/></svg><svg class="a" style="left:82px;top:304px;" width="12" height="14" viewBox="0 0 12 14"><path d="M6 0.6 L11.4 3.8 V10.2 L6 13.4 L0.6 10.2 V3.8 Z" fill="#f0f0f0" stroke="#404040" stroke-width="1.2"/><path d="M1.4 4.6 L6 7.2 L10.6 4.6" stroke="#404040" stroke-width="1" fill="none"/><path d="M6 7.2 V13" stroke="#888" stroke-width="1.6"/></svg><div class="t" style="left:101px;top:307.0685px;font-size:11px;color:#1e1e1e;font-family:'Liberation Mono',monospace;white-space:pre;">FreeBasicCharacterDevice(BasicCharacterDevice *)</div>
<svg class="a" style="left:67px;top:327px;" width="9" height="9" viewBox="0 0 9 9"><rect x="0.5" y="0.5" width="8" height="8" fill="#f5f7fd" stroke="#1e1e1e"/><path d="M2 4.5 H7" stroke="#1e1e1e"/><path d="M4.5 2 V7" stroke="#1e1e1e"/></svg><svg class="a" style="left:77px;top:331px;" width="4" height="1" viewBox="0 0 4 1"><rect x="0" y="0" width="1" height="1" fill="#333"/><rect x="2" y="0" width="1" height="1" fill="#333"/></svg><svg class="a" style="left:82px;top:324px;" width="12" height="14" viewBox="0 0 12 14"><path d="M6 0.6 L11.4 3.8 V10.2 L6 13.4 L0.6 10.2 V3.8 Z" fill="#f0f0f0" stroke="#404040" stroke-width="1.2"/><path d="M1.4 4.6 L6 7.2 L10.6 4.6" stroke="#404040" stroke-width="1" fill="none"/><path d="M6 7.2 V13" stroke="#888" stroke-width="1.6"/></svg><div class="t" style="left:101px;top:327.0685px;font-size:11px;color:#1e1e1e;font-family:'Liberation Mono',monospace;white-space:pre;">IS_ERR(const void *)</div>
</div>
<div class="a" style="left:872px;top:74px;width:373px;height:21px;background:#40568d;"></div>
<div class="t" style="left:876px;top:78.84px;font-size:12px;color:#f5f6fb;transform:scaleX(0.9500);transform-origin:0 0;">Code Explorer</div>
<svg class="a" style="left:1197px;top:83px;" width="9" height="5" viewBox="0 0 9 5"><path d="M0 0 H9 L4.5 4.5 Z" fill="#b4bedd"/></svg>
<svg class="a" style="left:1213px;top:78px;" width="10" height="13" viewBox="0 0 10 13"><path d="M3 0.5 H7 V7 H3 Z M0.5 7.5 H9.5 M5 7.5 V12.5" stroke="#c4cce6" fill="none" stroke-width="1.2"/><path d="M5.6 1 V6.5" stroke="#c4cce6" stroke-width="1"/></svg>
<svg class="a" style="left:1229px;top:79px;" width="11" height="11" viewBox="0 0 11 11"><path d="M0.5 0.5 L10.5 10.5 M10.5 0.5 L0.5 10.5" stroke="#c4cce6" stroke-width="1.2"/></svg>
<div class="a" style="left:872px;top:95px;width:373px;height:31px;background:#ccd5f0;"></div>
<div class="a" style="left:872px;top:126px;width:373px;height:1px;background:#8e97b2;"></div>
<div class="a" style="left:874px;top:97px;width:88px;height:26px;background:#d5dcf2;border:1px solid #8d96b3;"></div>
<svg class="a" style="left:886px;top:103px;" width="8" height="14" viewBox="0 0 8 14"><path d="M6 1 Q3.3 1 3.3 3.5 V5.3 Q3.3 7 1.3 7 Q3.3 7 3.3 8.7 V10.5 Q3.3 13 6 13" stroke="#ffffff" stroke-width="3" fill="none"/><path d="M6 1 Q3.3 1 3.3 3.5 V5.3 Q3.3 7 1.3 7 Q3.3 7 3.3 8.7 V10.5 Q3.3 13 6 13" stroke="#1e1e1e" stroke-width="1.7" fill="none"/></svg>
<svg class="a" style="left:909px;top:102px;" width="17" height="15" viewBox="0 0 17 15"><g fill="#1e1e1e" stroke="#ffffff" stroke-width="0.8"><rect x="1" y="0.8" width="3" height="3"/><rect x="1" y="5.8" width="3" height="3"/><rect x="1" y="10.8" width="3" height="3"/></g><path d="M6 2.3 H15.5 M6 7.3 H15.5 M6 12.3 H15.5" stroke="#1e1e1e" stroke-width="1.4"/></svg>
<div class="a" style="left:935px;top:99px;width:22px;height:22px;background:#1f3d7a;"></div>
<svg class="a" style="left:938px;top:101px;" width="16" height="18" viewBox="0 0 16 18"><rect x="0.5" y="0.5" width="2.5" height="2.5" fill="#fff"/><path d="M4 2 H7" stroke="#fff"/><rect x="3" y="4.5" width="2.5" height="2.5" fill="#e0c000"/><path d="M7 6 H12" stroke="#fff"/><rect x="3" y="8.5" width="2.5" height="2.5" fill="#fff"/><path d="M7 10 H10" stroke="#fff"/><rect x="6" y="12.5" width="2.5" height="2.5" fill="#e0c000"/><path d="M10 14 H14" stroke="#fff"/></svg>
<div class="a" style="left:964px;top:100px;width:1px;height:21px;background:#a4abc3;"></div>
<svg class="a" style="left:971px;top:102px;" width="16" height="16" viewBox="0 0 16 16"><defs><linearGradient id="sg971102" x1="0" y1="0" x2="0" y2="1"><stop offset="0" stop-color="#fff3a0"/><stop offset="0.5" stop-color="#ffc83d"/><stop offset="1" stop-color="#f09020"/></linearGradient></defs><polygon points="8.00,0.80 9.94,5.63 15.13,5.98 11.14,9.32 12.41,14.37 8.00,11.60 3.59,14.37 4.86,9.32 0.87,5.98 6.06,5.63" fill="url(#sg971102)" stroke="#e07a1f" stroke-width="1" stroke-linejoin="round"/></svg>
<svg class="a" style="left:992px;top:108px;" width="6" height="3" viewBox="0 0 6 3"><path d="M0 0 H6 L3 3 Z" fill="#1e1e1e"/></svg>
<div class="a" style="left:1000px;top:93px;width:35px;height:34px;background:#c8dcf4;border:3px solid #ee1111;"></div>
<div class="a" style="left:1004px;top:97px;width:27px;height:26px;background:#ccd5f0;"></div>
<div class="a" style="left:1006px;top:99px;width:22px;height:22px;background:#ffffff;border:1px solid #8b6508;"></div>
<svg class="a" style="left:1008px;top:101px;" width="18" height="18" viewBox="0 0 18 18"><defs><radialGradient id="mg" cx="0.4" cy="0.35" r="0.7"><stop offset="0" stop-color="#ffffff"/><stop offset="1" stop-color="#8cb8e0"/></radialGradient></defs><path d="M10 10 L15 15" stroke="#9a7a20" stroke-width="3.2" stroke-linecap="round"/><path d="M10 10 L15 15" stroke="#f0c850" stroke-width="1.8" stroke-linecap="round"/><circle cx="6.5" cy="6.4" r="5" fill="url(#mg)" stroke="#4a6a90" stroke-width="1.2"/></svg>
<svg class="a" style="left:1035px;top:101px;" width="14" height="16" viewBox="0 0 14 16"><path d="M1.5 15 L8 7.5" stroke="#333" stroke-width="2.6" stroke-linecap="round"/><path d="M4.5 12 L8 8" stroke="#ddd" stroke-width="1"/><path d="M6.5 6 Q6.5 1 11.5 1 L9.8 3.8 L11.2 5.3 L13.8 3.6 Q14 9 8.5 9 Z" fill="#e8e8e8" stroke="#666" stroke-width="0.9"/></svg>
<div class="a" style="left:1052px;top:100px;width:1px;height:21px;background:#a4abc3;"></div>
<svg class="a" style="left:1056px;top:109px;" width="6" height="3" viewBox="0 0 6 3"><path d="M0 0 H6 L3 3 Z" fill="#1e1e1e"/></svg>
<svg class="a" style="left:1071px;top:104px;" width="11" height="12" viewBox="0 0 11 12"><path d="M0 0 H11 L6.8 5 V11.5 L4.2 10 V5 Z" fill="#333"/></svg>
<div class="t" style="left:1084px;top:104.84px;font-size:12px;color:#1e1e1e;transform:scaleX(0.9922);transform-origin:0 0;">All types</div>
<div class="a" style="left:1133px;top:100px;width:1px;height:21px;background:#a4abc3;"></div>
<svg class="a" style="left:1137px;top:109px;" width="7" height="3" viewBox="0 0 7 3"><path d="M0 0 H7 L3.5 3.5 Z" fill="#1e1e1e"/></svg>
<div class="a" style="left:1153px;top:101px;width:67px;height:20px;background:#f5f6fb;border:1px solid #a4abc3;"></div>
<div class="a" style="left:1207px;top:102px;width:12px;height:18px;background:#dde2f2;border-left:1px solid #a4abc3;"></div>
<svg class="a" style="left:1210px;top:109px;" width="7" height="3" viewBox="0 0 7 3"><path d="M0 0 H7 L3.5 3.5 Z" fill="#1e1e1e"/></svg>
<svg class="a" style="left:1155px;top:104px;" width="14" height="14" viewBox="0 0 14 14"><path d="M0.5 0.5 H13.5 L8.5 6.5 V13 L5.5 11 V6.5 Z" fill="none" stroke="#8a8a8a"/></svg>
<div class="t" style="left:1175px;top:104.84px;font-size:12px;color:#8a8a8a;transform:scaleX(0.9750);transform-origin:0 0;">Filter</div>
<svg class="a" style="left:1237px;top:118px;" width="7" height="5" viewBox="0 0 7 5"><path d="M0 0.5 H7 M0 2 H7 L3.5 5 Z" stroke="#aab" fill="#aab" stroke-width="0.8"/></svg>
<div class="a" style="left:872px;top:127px;width:356px;height:716px;background:#f2f5fc;"></div>
<div class="a" style="left:1228px;top:127px;width:17px;height:716px;background:#e8e8ec;"></div>
<svg class="a" style="left:1232px;top:133px;" width="9" height="5" viewBox="0 0 9 5"><path d="M0 5 L4.5 0 L9 5 Z" fill="#868999"/></svg>
<div class="a" style="left:1232px;top:330px;width:9px;height:10px;background:#c2c3c9;"></div>
<svg class="a" style="left:1232px;top:833px;" width="9" height="5" viewBox="0 0 9 5"><path d="M0 0 L4.5 5 L9 0 Z" fill="#868999"/></svg>
<div class="a" style="left:873px;top:468px;width:355px;height:20px;background:#0a6fd6;"></div>
<div class="a" style="left:872px;top:126px;width:356px;height:717px;overflow:hidden">
<svg class="a" style="left:39px;top:5px;" width="12" height="14" viewBox="0 0 12 14"><path d="M6 0.6 L11.4 3.8 V10.2 L6 13.4 L0.6 10.2 V3.8 Z" fill="#f0f0f0" stroke="#404040" stroke-width="1.2"/><path d="M1.4 4.6 L6 7.2 L10.6 4.6" stroke="#404040" stroke-width="1" fill="none"/><path d="M6 7.2 V13" stroke="#888" stroke-width="1.6"/></svg>
<div class="t" style="left:58px;top:7.5685px;font-size:11px;color:#1e1e1e;font-family:'Liberation Mono',monospace;white-space:pre;">static allocate_sdma_queue(struct device_queue</div>
<svg class="a" style="left:39px;top:25px;" width="12" height="14" viewBox="0 0 12 14"><path d="M6 0.6 L11.4 3.8 V10.2 L6 13.4 L0.6 10.2 V3.8 Z" fill="#f0f0f0" stroke="#404040" stroke-width="1.2"/><path d="M1.4 4.6 L6 7.2 L10.6 4.6" stroke="#404040" stroke-width="1" fill="none"/><path d="M6 7.2 V13" stroke="#888" stroke-width="1.6"/></svg>
<div class="t" style="left:58px;top:27.5685px;font-size:11px;color:#1e1e1e;font-family:'Liberation Mono',monospace;white-space:pre;">static allocate_segment_by_default(struct f2fs</div>
<svg class="a" style="left:39px;top:45px;" width="12" height="14" viewBox="0 0 12 14"><path d="M6 0.6 L11.4 3.8 V10.2 L6 13.4 L0.6 10.2 V3.8 Z" fill="#f0f0f0" stroke="#404040" stroke-width="1.2"/><path d="M1.4 4.6 L6 7.2 L10.6 4.6" stroke="#404040" stroke-width="1" fill="none"/><path d="M6 7.2 V13" stroke="#888" stroke-width="1.6"/></svg>
<div class="t" style="left:58px;top:47.5685px;font-size:11px;color:#1e1e1e;font-family:'Liberation Mono',monospace;white-space:pre;">static allocate_shared_regs(int)</div>
<svg class="a" style="left:39px;top:65px;" width="12" height="14" viewBox="0 0 12 14"><path d="M6 0.6 L11.4 3.8 V10.2 L6 13.4 L0.6 10.2 V3.8 Z" fill="#f0f0f0" stroke="#404040" stroke-width="1.2"/><path d="M1.4 4.6 L6 7.2 L10.6 4.6" stroke="#404040" stroke-width="1" fill="none"/><path d="M6 7.2 V13" stroke="#888" stroke-width="1.6"/></svg>
<div class="t" style="left:58px;top:67.5685px;font-size:11px;color:#1e1e1e;font-family:'Liberation Mono',monospace;white-space:pre;">static allocate_signal_page(struct kfd_process</div>
<svg class="a" style="left:39px;top:85px;" width="12" height="14" viewBox="0 0 12 14"><path d="M6 0.6 L11.4 3.8 V10.2 L6 13.4 L0.6 10.2 V3.8 Z" fill="#f0f0f0" stroke="#404040" stroke-width="1.2"/><path d="M1.4 4.6 L6 7.2 L10.6 4.6" stroke="#404040" stroke-width="1" fill="none"/><path d="M6 7.2 V13" stroke="#888" stroke-width="1.6"/></svg>
<div class="t" style="left:58px;top:87.5685px;font-size:11px;color:#1e1e1e;font-family:'Liberation Mono',monospace;white-space:pre;">static allocate_slab(struct kmem_cache *, gfp_</div>
<svg class="a" style="left:38px;top:107px;" width="11" height="10" viewBox="0 0 11 10"><path d="M0.5 3.2 Q0.5 2.5 1.5 2 L5.5 0.3 Q6 0.1 6.8 0.4 L9.6 1.6 Q10.3 2 10.3 2.8 V6.4 Q10.3 7 9.5 7.4 L5 9.4 Q4.3 9.7 3.6 9.4 L1.2 8.2 Q0.5 7.8 0.5 7 Z" fill="#0b5aaa"/><path d="M3 3.6 L6.4 2.1 L7.6 2.6 L4.2 4.1 Z" fill="#ffffff" opacity="0.9"/></svg>
<div class="t" style="left:58px;top:107.5685px;font-size:11px;color:#1e1e1e;font-family:'Liberation Mono',monospace;white-space:pre;">allocate_snapshot</div>
<svg class="a" style="left:39px;top:125px;" width="12" height="14" viewBox="0 0 12 14"><path d="M6 0.6 L11.4 3.8 V10.2 L6 13.4 L0.6 10.2 V3.8 Z" fill="#f0f0f0" stroke="#404040" stroke-width="1.2"/><path d="M1.4 4.6 L6 7.2 L10.6 4.6" stroke="#404040" stroke-width="1" fill="none"/><path d="M6 7.2 V13" stroke="#888" stroke-width="1.6"/></svg>
<div class="t" style="left:58px;top:127.5685px;font-size:11px;color:#1e1e1e;font-family:'Liberation Mono',monospace;white-space:pre;">static allocate_stag(struct c4iw_rdev *, u32 *</div>
<svg class="a" style="left:39px;top:145px;" width="12" height="14" viewBox="0 0 12 14"><path d="M6 0.6 L11.4 3.8 V10.2 L6 13.4 L0.6 10.2 V3.8 Z" fill="#f0f0f0" stroke="#404040" stroke-width="1.2"/><path d="M1.4 4.6 L6 7.2 L10.6 4.6" stroke="#404040" stroke-width="1" fill="none"/><path d="M6 7.2 V13" stroke="#888" stroke-width="1.6"/></svg>
<div class="t" style="left:58px;top:147.56849999999997px;font-size:11px;color:#1e1e1e;font-family:'Liberation Mono',monospace;white-space:pre;">static allocate_threshold_blocks(unsigned int</div>
<svg class="a" style="left:39px;top:165px;" width="12" height="14" viewBox="0 0 12 14"><path d="M6 0.6 L11.4 3.8 V10.2 L6 13.4 L0.6 10.2 V3.8 Z" fill="#f0f0f0" stroke="#404040" stroke-width="1.2"/><path d="M1.4 4.6 L6 7.2 L10.6 4.6" stroke="#404040" stroke-width="1" fill="none"/><path d="M6 7.2 V13" stroke="#888" stroke-width="1.6"/></svg>
<div class="t" style="left:58px;top:167.56849999999997px;font-size:11px;color:#1e1e1e;font-family:'Liberation Mono',monospace;white-space:pre;">static allocate_tlabel(struct fw_card *)</div>
<svg class="a" style="left:39px;top:185px;" width="12" height="14" viewBox="0 0 12 14"><path d="M6 0.6 L11.4 3.8 V10.2 L6 13.4 L0.6 10.2 V3.8 Z" fill="#f0f0f0" stroke="#404040" stroke-width="1.2"/><path d="M1.4 4.6 L6 7.2 L10.6 4.6" stroke="#404040" stroke-width="1" fill="none"/><path d="M6 7.2 V13" stroke="#888" stroke-width="1.6"/></svg>
<div class="t" style="left:58px;top:187.56849999999997px;font-size:11px;color:#1e1e1e;font-family:'Liberation Mono',monospace;white-space:pre;">static allocate_trace_buffer(struct trace_arra</div>
<svg class="a" style="left:39px;top:205px;" width="12" height="14" viewBox="0 0 12 14"><path d="M6 0.6 L11.4 3.8 V10.2 L6 13.4 L0.6 10.2 V3.8 Z" fill="#f0f0f0" stroke="#404040" stroke-width="1.2"/><path d="M1.4 4.6 L6 7.2 L10.6 4.6" stroke="#404040" stroke-width="1" fill="none"/><path d="M6 7.2 V13" stroke="#888" stroke-width="1.6"/></svg>
<div class="t" style="left:58px;top:207.56849999999997px;font-size:11px;color:#1e1e1e;font-family:'Liberation Mono',monospace;white-space:pre;">static allocate_trace_buffers(struct trace_arr</div>
<svg class="a" style="left:39px;top:225px;" width="12" height="14" viewBox="0 0 12 14"><path d="M6 0.6 L11.4 3.8 V10.2 L6 13.4 L0.6 10.2 V3.8 Z" fill="#f0f0f0" stroke="#404040" stroke-width="1.2"/><path d="M1.4 4.6 L6 7.2 L10.6 4.6" stroke="#404040" stroke-width="1" fill="none"/><path d="M6 7.2 V13" stroke="#888" stroke-width="1.6"/></svg>
<div class="t" style="left:58px;top:227.56849999999997px;font-size:11px;color:#1e1e1e;font-family:'Liberation Mono',monospace;white-space:pre;">static allocate_tx_resources(struct snd_ff *)</div>
<svg class="a" style="left:39px;top:245px;" width="12" height="14" viewBox="0 0 12 14"><path d="M6 0.6 L11.4 3.8 V10.2 L6 13.4 L0.6 10.2 V3.8 Z" fill="#f0f0f0" stroke="#404040" stroke-width="1.2"/><path d="M1.4 4.6 L6 7.2 L10.6 4.6" stroke="#404040" stroke-width="1" fill="none"/><path d="M6 7.2 V13" stroke="#888" stroke-width="1.6"/></svg>
<div class="t" style="left:58px;top:247.56849999999997px;font-size:11px;color:#1e1e1e;font-family:'Liberation Mono',monospace;white-space:pre;">static allocate_uars(struct mlx5_ib_dev *, str</div>
<svg class="a" style="left:39px;top:265px;" width="12" height="14" viewBox="0 0 12 14"><path d="M6 0.6 L11.4 3.8 V10.2 L6 13.4 L0.6 10.2 V3.8 Z" fill="#f0f0f0" stroke="#404040" stroke-width="1.2"/><path d="M1.4 4.6 L6 7.2 L10.6 4.6" stroke="#404040" stroke-width="1" fill="none"/><path d="M6 7.2 V13" stroke="#888" stroke-width="1.6"/></svg>
<div class="t" style="left:58px;top:267.5685px;font-size:11px;color:#1e1e1e;font-family:'Liberation Mono',monospace;white-space:pre;">static allocate_vmid(struct device_queue_manag</div>
<svg class="a" style="left:39px;top:285px;" width="12" height="14" viewBox="0 0 12 14"><path d="M6 0.6 L11.4 3.8 V10.2 L6 13.4 L0.6 10.2 V3.8 Z" fill="#f0f0f0" stroke="#404040" stroke-width="1.2"/><path d="M1.4 4.6 L6 7.2 L10.6 4.6" stroke="#404040" stroke-width="1" fill="none"/><path d="M6 7.2 V13" stroke="#888" stroke-width="1.6"/></svg>
<div class="t" style="left:58px;top:287.5685px;font-size:11px;color:#1e1e1e;font-family:'Liberation Mono',monospace;white-space:pre;">allocate_vpid()</div>
<svg class="a" style="left:39px;top:305px;" width="12" height="14" viewBox="0 0 12 14"><path d="M6 0.6 L11.4 3.8 V10.2 L6 13.4 L0.6 10.2 V3.8 Z" fill="#f0f0f0" stroke="#404040" stroke-width="1.2"/><path d="M1.4 4.6 L6 7.2 L10.6 4.6" stroke="#404040" stroke-width="1" fill="none"/><path d="M6 7.2 V13" stroke="#888" stroke-width="1.6"/></svg>
<div class="t" style="left:58px;top:307.5685px;font-size:11px;color:#1e1e1e;font-family:'Liberation Mono',monospace;white-space:pre;">static allocate_window(struct c4iw_rdev *, u32</div>
<svg class="a" style="left:39px;top:325px;" width="12" height="14" viewBox="0 0 12 14"><path d="M6 0.6 L11.4 3.8 V10.2 L6 13.4 L0.6 10.2 V3.8 Z" fill="#f0f0f0" stroke="#404040" stroke-width="1.2"/><path d="M1.4 4.6 L6 7.2 L10.6 4.6" stroke="#404040" stroke-width="1" fill="none"/><path d="M6 7.2 V13" stroke="#888" stroke-width="1.6"/></svg>
<div class="t" style="left:58px;top:327.5685px;font-size:11px;color:#1e1e1e;font-family:'Liberation Mono',monospace;white-space:pre;">static allocate_without_wrapping_disk(reiserfs</div>
<svg class="a" style="left:39px;top:345px;" width="12" height="14" viewBox="0 0 12 14"><path d="M6 0.5 L11.5 3.8 V10.3 L6 13.5 L0.5 10.3 V3.8 Z" fill="none" stroke="#ffffff" stroke-width="2.6"/><path d="M6 0.6 L11.4 3.8 V10.2 L6 13.4 L0.6 10.2 V3.8 Z" fill="#f0f0f0" stroke="#404040" stroke-width="1.2"/><path d="M1.4 4.6 L6 7.2 L10.6 4.6" stroke="#404040" stroke-width="1" fill="none"/><path d="M6 7.2 V13" stroke="#888" stroke-width="1.6"/></svg>
<div class="t" style="left:58px;top:347.5685px;font-size:11px;color:#ffffff;font-family:'Liberation Mono',monospace;white-space:pre;">AllocateBasicCharacterDevice(const char *)</div>
<svg class="a" style="left:39px;top:365px;" width="12" height="14" viewBox="0 0 12 14"><path d="M6 0.6 L11.4 3.8 V10.2 L6 13.4 L0.6 10.2 V3.8 Z" fill="#f0f0f0" stroke="#404040" stroke-width="1.2"/><path d="M1.4 4.6 L6 7.2 L10.6 4.6" stroke="#404040" stroke-width="1" fill="none"/><path d="M6 7.2 V13" stroke="#888" stroke-width="1.6"/></svg>
<div class="t" style="left:58px;top:367.5685px;font-size:11px;color:#1e1e1e;font-family:'Liberation Mono',monospace;white-space:pre;">static allocated(struct pipe_buffer *)</div>
<svg class="a" style="left:38px;top:387px;" width="11" height="10" viewBox="0 0 11 10"><path d="M0.5 3.2 Q0.5 2.5 1.5 2 L5.5 0.3 Q6 0.1 6.8 0.4 L9.6 1.6 Q10.3 2 10.3 2.8 V6.4 Q10.3 7 9.5 7.4 L5 9.4 Q4.3 9.7 3.6 9.4 L1.2 8.2 Q0.5 7.8 0.5 7 Z" fill="#0b5aaa"/><path d="M3 3.6 L6.4 2.1 L7.6 2.6 L4.2 4.1 Z" fill="#ffffff" opacity="0.9"/></svg>
<div class="t" style="left:58px;top:387.5685px;font-size:11px;color:#1e1e1e;font-family:'Liberation Mono',monospace;white-space:pre;">allocated_irqs</div>
<svg class="a" style="left:38px;top:407px;" width="11" height="10" viewBox="0 0 11 10"><path d="M0.5 3.2 Q0.5 2.5 1.5 2 L5.5 0.3 Q6 0.1 6.8 0.4 L9.6 1.6 Q10.3 2 10.3 2.8 V6.4 Q10.3 7 9.5 7.4 L5 9.4 Q4.3 9.7 3.6 9.4 L1.2 8.2 Q0.5 7.8 0.5 7 Z" fill="#0b5aaa"/><path d="M3 3.6 L6.4 2.1 L7.6 2.6 L4.2 4.1 Z" fill="#ffffff" opacity="0.9"/></svg>
<div class="t" style="left:58px;top:407.5685px;font-size:11px;color:#1e1e1e;font-family:'Liberation Mono',monospace;white-space:pre;">allocated_pwms</div>
<svg class="a" style="left:38px;top:427px;" width="11" height="10" viewBox="0 0 11 10"><path d="M0.5 3.2 Q0.5 2.5 1.5 2 L5.5 0.3 Q6 0.1 6.8 0.4 L9.6 1.6 Q10.3 2 10.3 2.8 V6.4 Q10.3 7 9.5 7.4 L5 9.4 Q4.3 9.7 3.6 9.4 L1.2 8.2 Q0.5 7.8 0.5 7 Z" fill="#0b5aaa"/><path d="M3 3.6 L6.4 2.1 L7.6 2.6 L4.2 4.1 Z" fill="#ffffff" opacity="0.9"/></svg>
<div class="t" style="left:58px;top:427.5685px;font-size:11px;color:#1e1e1e;font-family:'Liberation Mono',monospace;white-space:pre;">allocated_unsafe_pages</div>
<svg class="a" style="left:39px;top:445px;" width="12" height="14" viewBox="0 0 12 14"><path d="M6 0.6 L11.4 3.8 V10.2 L6 13.4 L0.6 10.2 V3.8 Z" fill="#f0f0f0" stroke="#404040" stroke-width="1.2"/><path d="M1.4 4.6 L6 7.2 L10.6 4.6" stroke="#404040" stroke-width="1" fill="none"/><path d="M6 7.2 V13" stroke="#888" stroke-width="1.6"/></svg>
<div class="t" style="left:58px;top:447.5685px;font-size:11px;color:#1e1e1e;font-family:'Liberation Mono',monospace;white-space:pre;">static AllocateRingBuffers(struct pci_dev *, u</div>
<svg class="a" style="left:38px;top:467px;" width="11" height="10" viewBox="0 0 11 10"><path d="M0.5 3.2 Q0.5 2.5 1.5 2 L5.5 0.3 Q6 0.1 6.8 0.4 L9.6 1.6 Q10.3 2 10.3 2.8 V6.4 Q10.3 7 9.5 7.4 L5 9.4 Q4.3 9.7 3.6 9.4 L1.2 8.2 Q0.5 7.8 0.5 7 Z" fill="#0b5aaa"/><path d="M3 3.6 L6.4 2.1 L7.6 2.6 L4.2 4.1 Z" fill="#ffffff" opacity="0.9"/></svg>
<div class="t" style="left:58px;top:467.5685px;font-size:11px;color:#1e1e1e;font-family:'Liberation Mono',monospace;white-space:pre;">allocation_attrs</div>
<svg class="a" style="left:27px;top:486px;" width="7" height="11" viewBox="0 0 7 11"><path d="M1 1 L6 5.5 L1 10 Z" fill="none" stroke="#1e1e1e" stroke-width="1.3" stroke-linejoin="miter"/></svg>
<svg class="a" style="left:37px;top:484px;" width="16" height="16" viewBox="0 0 16 16"><g transform="scale(1.0)"><path d="M5.9 1.1 L8.8 3.9 L3.9 8.7 L1 5.8 Z M13.1 5.2 L14.9 7 L11.8 9.4 L10.3 7.7 Z M13.1 10.1 L14.9 12.1 L12 14.8 L10.2 13.2 Z" fill="#c97a1c" stroke="#c97a1c" stroke-width="0.7" stroke-linejoin="round"/><path d="M7 6.2 H12 M8.6 6.2 V11.8 H11.5" stroke="#c97a1c" stroke-width="1.3" fill="none"/></g></svg>
<div class="t" style="left:58px;top:487.5685px;font-size:11px;color:#1e1e1e;font-family:'Liberation Mono',monospace;white-space:pre;">enum allocation_event</div>
<svg class="a" style="left:38px;top:507px;" width="11" height="10" viewBox="0 0 11 10"><path d="M0.5 3.2 Q0.5 2.5 1.5 2 L5.5 0.3 Q6 0.1 6.8 0.4 L9.6 1.6 Q10.3 2 10.3 2.8 V6.4 Q10.3 7 9.5 7.4 L5 9.4 Q4.3 9.7 3.6 9.4 L1.2 8.2 Q0.5 7.8 0.5 7 Z" fill="#0b5aaa"/><path d="M3 3.6 L6.4 2.1 L7.6 2.6 L4.2 4.1 Z" fill="#ffffff" opacity="0.9"/></svg>
<div class="t" style="left:58px;top:507.5685px;font-size:11px;color:#1e1e1e;font-family:'Liberation Mono',monospace;white-space:pre;">allocation_floor</div>
<svg class="a" style="left:39px;top:525px;" width="12" height="14" viewBox="0 0 12 14"><path d="M6 0.6 L11.4 3.8 V10.2 L6 13.4 L0.6 10.2 V3.8 Z" fill="#f0f0f0" stroke="#404040" stroke-width="1.2"/><path d="M1.4 4.6 L6 7.2 L10.6 4.6" stroke="#404040" stroke-width="1" fill="none"/><path d="M6 7.2 V13" stroke="#888" stroke-width="1.6"/></svg>
<div class="t" style="left:58px;top:527.5685px;font-size:11px;color:#1e1e1e;font-family:'Liberation Mono',monospace;white-space:pre;">static allocation_needed(int, b_blocknr_t, str</div>
<svg class="a" style="left:39px;top:545px;" width="12" height="14" viewBox="0 0 12 14"><path d="M6 0.6 L11.4 3.8 V10.2 L6 13.4 L0.6 10.2 V3.8 Z" fill="#f0f0f0" stroke="#404040" stroke-width="1.2"/><path d="M1.4 4.6 L6 7.2 L10.6 4.6" stroke="#404040" stroke-width="1" fill="none"/><path d="M6 7.2 V13" stroke="#888" stroke-width="1.6"/></svg>
<div class="t" style="left:58px;top:547.5685px;font-size:11px;color:#1e1e1e;font-family:'Liberation Mono',monospace;white-space:pre;">static allocation_policy_show(struct device *,</div>
<svg class="a" style="left:39px;top:565px;" width="12" height="14" viewBox="0 0 12 14"><path d="M6 0.6 L11.4 3.8 V10.2 L6 13.4 L0.6 10.2 V3.8 Z" fill="#f0f0f0" stroke="#404040" stroke-width="1.2"/><path d="M1.4 4.6 L6 7.2 L10.6 4.6" stroke="#404040" stroke-width="1" fill="none"/><path d="M6 7.2 V13" stroke="#888" stroke-width="1.6"/></svg>
<div class="t" style="left:58px;top:567.5685px;font-size:11px;color:#1e1e1e;font-family:'Liberation Mono',monospace;white-space:pre;">static allocation_unit_size_show(struct device</div>
<svg class="a" style="left:39px;top:585px;" width="12" height="14" viewBox="0 0 12 14"><path d="M6 0.6 L11.4 3.8 V10.2 L6 13.4 L0.6 10.2 V3.8 Z" fill="#f0f0f0" stroke="#404040" stroke-width="1.2"/><path d="M1.4 4.6 L6 7.2 L10.6 4.6" stroke="#404040" stroke-width="1" fill="none"/><path d="M6 7.2 V13" stroke="#888" stroke-width="1.6"/></svg>
<div class="t" style="left:58px;top:587.5685px;font-size:11px;color:#1e1e1e;font-family:'Liberation Mono',monospace;white-space:pre;">static allocator_empty(struct entry_alloc *)</div>
<svg class="a" style="left:38px;top:607px;" width="11" height="10" viewBox="0 0 11 10"><path d="M0.5 3.2 Q0.5 2.5 1.5 2 L5.5 0.3 Q6 0.1 6.8 0.4 L9.6 1.6 Q10.3 2 10.3 2.8 V6.4 Q10.3 7 9.5 7.4 L5 9.4 Q4.3 9.7 3.6 9.4 L1.2 8.2 Q0.5 7.8 0.5 7 Z" fill="#0b5aaa"/><path d="M3 3.6 L6.4 2.1 L7.6 2.6 L4.2 4.1 Z" fill="#ffffff" opacity="0.9"/></svg>
<div class="t" style="left:58px;top:607.5685px;font-size:11px;color:#1e1e1e;font-family:'Liberation Mono',monospace;white-space:pre;">allocators</div>
<svg class="a" style="left:38px;top:627px;" width="11" height="10" viewBox="0 0 11 10"><path d="M0.5 3.2 Q0.5 2.5 1.5 2 L5.5 0.3 Q6 0.1 6.8 0.4 L9.6 1.6 Q10.3 2 10.3 2.8 V6.4 Q10.3 7 9.5 7.4 L5 9.4 Q4.3 9.7 3.6 9.4 L1.2 8.2 Q0.5 7.8 0.5 7 Z" fill="#0b5aaa"/><path d="M3 3.6 L6.4 2.1 L7.6 2.6 L4.2 4.1 Z" fill="#ffffff" opacity="0.9"/></svg>
<div class="t" style="left:58px;top:627.5685px;font-size:11px;color:#1e1e1e;font-family:'Liberation Mono',monospace;white-space:pre;">allocators_list</div>
<svg class="a" style="left:39px;top:645px;" width="12" height="14" viewBox="0 0 12 14"><path d="M6 0.6 L11.4 3.8 V10.2 L6 13.4 L0.6 10.2 V3.8 Z" fill="#f0f0f0" stroke="#404040" stroke-width="1.2"/><path d="M1.4 4.6 L6 7.2 L10.6 4.6" stroke="#404040" stroke-width="1" fill="none"/><path d="M6 7.2 V13" stroke="#888" stroke-width="1.6"/></svg>
<div class="t" style="left:58px;top:647.5685px;font-size:11px;color:#1e1e1e;font-family:'Liberation Mono',monospace;white-space:pre;">static AllocCommonBuffers(struct ngene *)</div>
<svg class="a" style="left:27px;top:666px;" width="7" height="11" viewBox="0 0 7 11"><path d="M1 1 L6 5.5 L1 10 Z" fill="none" stroke="#1e1e1e" stroke-width="1.3" stroke-linejoin="miter"/></svg>
<svg class="a" style="left:37px;top:664px;" width="16" height="16" viewBox="0 0 16 16"><g transform="scale(1.0)"><path d="M5.9 1.1 L8.8 3.9 L3.9 8.7 L1 5.8 Z M13.1 5.2 L14.9 7 L11.8 9.4 L10.3 7.7 Z M13.1 10.1 L14.9 12.1 L12 14.8 L10.2 13.2 Z" fill="#c97a1c" stroke="#c97a1c" stroke-width="0.7" stroke-linejoin="round"/><path d="M7 6.2 H12 M8.6 6.2 V11.8 H11.5" stroke="#c97a1c" stroke-width="1.3" fill="none"/></g></svg>
<div class="t" style="left:58px;top:667.5685px;font-size:11px;color:#1e1e1e;font-family:'Liberation Mono',monospace;white-space:pre;">struct allocDescImpUse</div>
<svg class="a" style="left:27px;top:686px;" width="7" height="11" viewBox="0 0 7 11"><path d="M1 1 L6 5.5 L1 10 Z" fill="none" stroke="#1e1e1e" stroke-width="1.3" stroke-linejoin="miter"/></svg>
<svg class="a" style="left:37px;top:684px;" width="16" height="16" viewBox="0 0 16 16"><g transform="scale(1.0)"><path d="M5.9 1.1 L8.8 3.9 L3.9 8.7 L1 5.8 Z M13.1 5.2 L14.9 7 L11.8 9.4 L10.3 7.7 Z M13.1 10.1 L14.9 12.1 L12 14.8 L10.2 13.2 Z" fill="#c97a1c" stroke="#c97a1c" stroke-width="0.7" stroke-linejoin="round"/><path d="M7 6.2 H12 M8.6 6.2 V11.8 H11.5" stroke="#c97a1c" stroke-width="1.3" fill="none"/></g></svg>
<div class="t" style="left:58px;top:687.5685px;font-size:11px;color:#1e1e1e;font-family:'Liberation Mono',monospace;white-space:pre;">struct allocExtDesc</div>
</div>
<div class="a" style="left:33px;top:844px;width:137px;height:20px;background:#40568d;"></div>
<div class="t" style="left:38.2px;top:847.84px;font-size:12px;color:#e6eaf6;transform:scaleX(0.9700);transform-origin:0 0;">VisualKernel diagnostics</div>
<div class="a" style="left:172px;top:844px;width:158px;height:20px;background:#40568d;"></div>
<div class="t" style="left:177.6px;top:847.84px;font-size:12px;color:#e6eaf6;transform:scaleX(0.9700);transform-origin:0 0;">Find Symbol Results [Clang]</div>
<div class="a" style="left:332px;top:844px;width:122px;height:20px;background:#ffffff;"></div>
<div class="t" style="left:336.4px;top:847.84px;font-size:12px;color:#1e1e1e;transform:scaleX(0.9700);transform-origin:0 0;">Code Explorer Details</div>
<div class="a" style="left:456px;top:844px;width:104px;height:20px;background:#40568d;"></div>
<div class="t" style="left:460.9px;top:847.84px;font-size:12px;color:#e6eaf6;transform:scaleX(0.9700);transform-origin:0 0;">VisualKernel Build</div>
<div class="a" style="left:562px;top:844px;width:48px;height:20px;background:#40568d;"></div>
<div class="t" style="left:568.5px;top:847.84px;font-size:12px;color:#e6eaf6;transform:scaleX(0.9700);transform-origin:0 0;">Output</div>
<div class="a" style="left:872px;top:844px;width:83px;height:20px;background:#ffffff;"></div>
<div class="t" style="left:876.3px;top:847.84px;font-size:12px;color:#1e1e1e;transform:scaleX(0.9700);transform-origin:0 0;">Code Explorer</div>
<div class="a" style="left:957px;top:844px;width:63px;height:20px;background:#40568d;"></div>
<div class="t" style="left:962.0px;top:847.84px;font-size:12px;color:#e6eaf6;transform:scaleX(0.9700);transform-origin:0 0;">Properties</div>
<div class="a" style="left:1022px;top:844px;width:100px;height:20px;background:#40568d;"></div>
<div class="t" style="left:1027.7px;top:847.84px;font-size:12px;color:#e6eaf6;transform:scaleX(0.9700);transform-origin:0 0;">Solution Explorer</div>
<div class="a" style="left:1124px;top:844px;width:74px;height:20px;background:#40568d;"></div>
<div class="t" style="left:1128.6px;top:847.84px;font-size:12px;color:#e6eaf6;transform:scaleX(0.9700);transform-origin:0 0;">Git Changes</div>
<svg class="a" style="left:5px;top:875px;" width="17" height="17" viewBox="0 0 17 17"><path d="M0.6 0.6 H15.6 V12.6 H10.8 L8 15.4 L5.2 12.6 H0.6 Z" fill="#525e9a" stroke="#ffffff" stroke-width="1.2"/></svg>
<div class="t" style="left:29px;top:876.84px;font-size:12px;color:#ffffff;transform:scaleX(0.8937);transform-origin:0 0;">Ready</div>
<svg class="a" style="left:906px;top:876px;" width="11" height="14" viewBox="0 0 11 14"><path d="M5.5 13 V1.5 M1 6 L5.5 1.5 L10 6" stroke="#fff" stroke-width="1.3" fill="none"/></svg>
<div class="t" style="left:926px;top:876.84px;font-size:12px;color:#ffffff;transform:scaleX(0.9909);transform-origin:0 0;">Add to Source Control</div>
<svg class="a" style="left:1050px;top:881px;" width="8" height="5" viewBox="0 0 8 5"><path d="M0 5 L4 0 L8 5 Z" fill="#fff"/></svg>
<svg class="a" style="left:1080px;top:875px;" width="15" height="15" viewBox="0 0 15 15"><path d="M7.5 0.5 L14.5 7.5 L7.5 14.5 L0.5 7.5 Z" fill="#fff"/><circle cx="6" cy="5" r="1.4" fill="#40508d"/><circle cx="9" cy="9.5" r="1.4" fill="#40508d"/><path d="M6 5 L9 9.5" stroke="#40508d" stroke-width="1.2"/></svg>
<div class="t" style="left:1101px;top:876.84px;font-size:12px;color:#ffffff;transform:scaleX(0.9889);transform-origin:0 0;">Select Repository</div>
<svg class="a" style="left:1201px;top:881px;" width="8" height="5" viewBox="0 0 8 5"><path d="M0 5 L4 0 L8 5 Z" fill="#fff"/></svg>
<svg class="a" style="left:1227px;top:875px;" width="13" height="15" viewBox="0 0 13 15"><path d="M1 11.5 H12 L10.5 9.5 V6 Q10.5 1.5 6.5 1.5 Q2.5 1.5 2.5 6 V9.5 Z" fill="#5061a0" stroke="#fff" stroke-width="1.1"/><path d="M5 13 Q6.5 14.5 8 13" stroke="#fff" fill="none"/></svg>
<svg class="a" style="left:1264px;top:881px;" width="8" height="8" viewBox="0 0 8 8"><rect x="6" y="0" width="1" height="1" fill="#b8a890"/><rect x="4" y="2" width="1" height="1" fill="#b8a890"/><rect x="6" y="2" width="1" height="1" fill="#b8a890"/><rect x="2" y="4" width="1" height="1" fill="#b8a890"/><rect x="4" y="4" width="1" height="1" fill="#b8a890"/><rect x="6" y="4" width="1" height="1" fill="#b8a890"/><rect x="0" y="6" width="1" height="1" fill="#b8a890"/><rect x="2" y="6" width="1" height="1" fill="#b8a890"/><rect x="4" y="6" width="1" height="1" fill="#b8a890"/><rect x="6" y="6" width="1" height="1" fill="#b8a890"/></svg>
</body></html>
